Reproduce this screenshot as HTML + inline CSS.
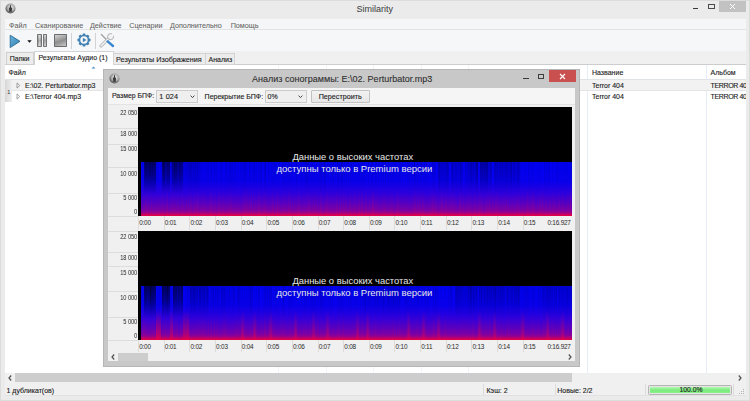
<!DOCTYPE html>
<html><head><meta charset="utf-8">
<style>
*{margin:0;padding:0;box-sizing:border-box}
html,body{width:750px;height:401px;overflow:hidden;background:#ebebeb}
body{position:relative;font-family:"Liberation Sans",sans-serif;font-size:7px;color:#1c1c1c}
.a{position:absolute}
.t{position:absolute;white-space:nowrap;line-height:1;-webkit-text-stroke:0.12px #1c1c1c}
.m{color:#626262;-webkit-text-stroke:0.05px #626262;font-size:7.2px}
.yl{position:absolute;white-space:nowrap;line-height:1;font-size:6.5px;letter-spacing:-0.2px;word-spacing:0.3px;color:#2a2a2a;text-align:right;width:29px;left:0;transform:scaleX(0.88);transform-origin:100% 50%}
.tl{position:absolute;white-space:nowrap;line-height:1;font-size:6.4px;letter-spacing:-0.2px;color:#2a2a2a}
.hl{position:absolute;left:0;width:30px;height:1px;background:#dddddd}
</style></head><body>
<!-- main window frame -->
<div class="a" style="left:0;top:0;width:750px;height:401px;background:#ebebeb;border:1px solid #dcdcdc"></div>
<!-- app icon -->
<svg class="a" style="left:4.8px;top:3.2px" width="11" height="11" viewBox="0 0 11 11">
 <defs><radialGradient id="ic" cx="0.55" cy="0.4" r="0.6"><stop offset="0" stop-color="#f0f0f0"/><stop offset="0.6" stop-color="#a8a8a8"/><stop offset="1" stop-color="#505050"/></radialGradient></defs>
 <circle cx="5.5" cy="5.5" r="5" fill="url(#ic)"/>
 <path d="M5 2.3h1v1.8l1 1.1v1.3l-0.5 0.5l0.8 1.8h-3.6l0.8-1.8l-0.5-0.5v-1.3l1-1.1z" fill="#383838"/>
</svg>
<div class="t" style="left:356.5px;top:5.2px;font-size:9px;color:#444;-webkit-text-stroke:0.05px #444">Similarity</div>
<!-- caption buttons -->
<div class="a" style="left:693px;top:7.6px;width:5px;height:1.3px;background:#3a3a3a"></div>
<div class="a" style="left:708px;top:4px;width:6.5px;height:4.6px;border:0.8px solid #4a4a4a;border-top-width:1.6px"></div>
<div class="a" style="left:719px;top:1px;width:26.5px;height:11.3px;background:#c2c2c2"></div>
<svg class="a" style="left:728.5px;top:3.2px" width="7" height="7" viewBox="0 0 7 7"><path d="M1 1L6 6M6 1L1 6" stroke="#fff" stroke-width="1"/></svg>

<!-- client area -->
<div class="a" style="left:4.5px;top:18.6px;width:741px;height:377.5px;background:#f0f0f0"></div>
<!-- menu bar -->
<div class="a" style="left:4.5px;top:18.6px;width:741px;height:11px;background:#f5f6f7;border-bottom:1px solid #e2e3e4"></div>
<div class="t m" style="left:9px;top:21.5px">Файл</div>
<div class="t m" style="left:35px;top:21.5px">Сканирование</div>
<div class="t m" style="left:90px;top:21.5px">Действие</div>
<div class="t m" style="left:129.3px;top:21.5px">Сценарии</div>
<div class="t m" style="left:170px;top:21.5px">Дополнительно</div>
<div class="t m" style="left:230.7px;top:21.5px">Помощь</div>
<!-- toolbar -->
<div class="a" style="left:4.5px;top:29.6px;width:741px;height:21.5px;background:#f6f7f8"></div>
<svg class="a" style="left:9px;top:33.5px" width="13" height="15" viewBox="0 0 13 15">
 <defs><linearGradient id="pg" x1="0" y1="0" x2="1" y2="1"><stop offset="0" stop-color="#6bb4de"/><stop offset="1" stop-color="#2f7db0"/></linearGradient></defs>
 <path d="M1.2 1.2L11 7.3L1.2 13.6Z" fill="url(#pg)" stroke="#2c6a92" stroke-width="0.9" stroke-linejoin="round"/>
</svg>
<svg class="a" style="left:26.5px;top:39.5px" width="5" height="3" viewBox="0 0 5 3"><path d="M0.3 0.3H4.7L2.5 2.8Z" fill="#111"/></svg>
<!-- pause -->
<div class="a" style="left:37.3px;top:34px;width:4.6px;height:12.8px;border:1px solid #747474;border-radius:0.8px;background:linear-gradient(90deg,rgba(0,0,0,.12),rgba(255,255,255,.35) 55%,rgba(0,0,0,.1)),linear-gradient(#d6d6d6,#9a9a9a 50%,#d0d0d0)"></div>
<div class="a" style="left:43px;top:34px;width:4px;height:12.8px;border:1px solid #747474;border-radius:0.8px;background:linear-gradient(90deg,rgba(0,0,0,.12),rgba(255,255,255,.35) 55%,rgba(0,0,0,.1)),linear-gradient(#d6d6d6,#9a9a9a 50%,#d0d0d0)"></div>
<!-- stop -->
<div class="a" style="left:54px;top:34px;width:13px;height:12.8px;border:1px solid #6c6c6c;border-radius:0.8px;background:linear-gradient(160deg,#d4d4d4,#8e8e8e 55%,#c8c8c8)"></div>
<div class="a" style="left:71.3px;top:33px;width:1px;height:15.5px;background:#d2d2d2"></div>
<!-- gear -->
<svg class="a" style="left:77px;top:33.4px" width="14" height="14" viewBox="0 0 14 14">
 <g fill="#4282b4">
  <circle cx="7" cy="7" r="5.3"/>
  <rect x="5.6" y="0.5" width="2.8" height="13" rx="0.6"/>
  <rect x="5.6" y="0.5" width="2.8" height="13" rx="0.6" transform="rotate(45 7 7)"/>
  <rect x="5.6" y="0.5" width="2.8" height="13" rx="0.6" transform="rotate(90 7 7)"/>
  <rect x="5.6" y="0.5" width="2.8" height="13" rx="0.6" transform="rotate(135 7 7)"/>
 </g>
 <circle cx="7" cy="7" r="3.7" fill="#f4f6f8"/>
 <path d="M5.9 4.7L9.5 7L5.9 9.3Z" fill="#4282b4"/>
</svg>
<div class="a" style="left:94.8px;top:33px;width:1px;height:15.5px;background:#d2d2d2"></div>
<!-- tools -->
<svg class="a" style="left:99px;top:33px" width="16" height="15" viewBox="0 0 16 15">
 <path d="M2.4 1.4L7.8 7" stroke="#a4a4a4" stroke-width="1.4" stroke-linecap="round"/>
 <path d="M9.5 5.6L2 13" stroke="#a8a8a8" stroke-width="3" stroke-linecap="round"/>
 <path d="M9.5 5.6L2 13" stroke="#f4f4f4" stroke-width="1.6" stroke-linecap="round"/>
 <circle cx="11.6" cy="3.6" r="3" fill="#f4f4f4" stroke="#a8a8a8" stroke-width="0.9"/>
 <path d="M11.3 3.9L13.6 -0.2L15.6 2L11.3 3.9Z" fill="#f6f7f8"/>
 <path d="M8.6 8.4L14 13" stroke="#3a86d0" stroke-width="2.4" stroke-linecap="round"/>
</svg>

<!-- tab strip -->
<div class="a" style="left:4.5px;top:51px;width:741px;height:14px;background:#f0f0f0;border-bottom:1px solid #cdcdcd"></div>
<div class="a" style="left:5.5px;top:52.2px;width:28.5px;height:12.8px;background:#ececec;border:1px solid #d0d0d0"></div>
<div class="t" style="left:9.8px;top:55.3px">Папки</div>
<div class="a" style="left:113.5px;top:52.6px;width:92px;height:12.4px;background:#ececec;border:1px solid #d3d3d3;border-left:none"></div>
<div class="t" style="left:116px;top:55.5px;font-size:7.25px">Результаты Изображения</div>
<div class="a" style="left:205.5px;top:52.6px;width:29px;height:12.4px;background:#ececec;border:1px solid #d3d3d3;border-left:none"></div>
<div class="t" style="left:208.5px;top:55.5px">Анализ</div>
<div class="a" style="left:33.6px;top:51.2px;width:80px;height:14.8px;background:#fff;border:1px solid #d3d3d3;border-bottom:none"></div>
<div class="t" style="left:38.5px;top:54.2px">Результаты Аудио (1)</div>

<!-- list -->
<div class="a" style="left:4.5px;top:65px;width:741px;height:308px;background:#fff;overflow:hidden">
 <div class="a" style="left:273.5px;top:0;width:1px;height:308px;background:#f0f4fa"></div>
 <div class="a" style="left:321.3px;top:0;width:1px;height:308px;background:#f0f4fa"></div>
 <div class="a" style="left:368.5px;top:0;width:1px;height:308px;background:#f0f4fa"></div>
 <div class="a" style="left:463.5px;top:0;width:1px;height:308px;background:#f0f4fa"></div>
 <div class="a" style="left:416.5px;top:0;width:1px;height:308px;background:#f0f4fa"></div>
 <div class="a" style="left:582.8px;top:0;width:1px;height:308px;background:#e6edf6"></div>
 <div class="a" style="left:701.5px;top:0;width:1px;height:308px;background:#e6edf6"></div>
 <div class="a" style="left:0;top:13.5px;width:741px;height:1.5px;background:#e0e3e6"></div>
 <div class="t" style="left:4px;top:3.8px">Файл</div>
 <div class="t" style="left:587.5px;top:3.8px">Название</div>
 <div class="t" style="left:706px;top:3.8px">Альбом</div>
 <svg class="a" style="left:86.7px;top:0.6px" width="5" height="3" viewBox="0 0 5 3"><path d="M0.5 2.6L2.5 0.5L4.5 2.6Z" fill="#5592c4"/></svg>
 <div class="a" style="left:0;top:15px;width:741px;height:10.5px;background:#f2f2f2;border-bottom:1px solid #e4e4e4"></div>
 <div class="a" style="left:0;top:15px;width:7.5px;height:21.5px;background:linear-gradient(90deg,#d6d6d6,#eeeeee)"></div>
 <div class="t" style="left:2.8px;top:25.2px;font-size:5.5px;color:#333;-webkit-text-stroke:0">1</div>
 <svg class="a" style="left:11px;top:17px" width="5" height="7" viewBox="0 0 5 7"><path d="M1 0.9L3.8 3.5L1 6.1Z" fill="none" stroke="#8a8a8a" stroke-width="0.8"/></svg>
 <svg class="a" style="left:11px;top:28px" width="5" height="7" viewBox="0 0 5 7"><path d="M1 0.9L3.8 3.5L1 6.1Z" fill="none" stroke="#8a8a8a" stroke-width="0.8"/></svg>
 <div class="t" style="left:20.5px;top:17px">E:\02. Perturbator.mp3</div>
 <div class="t" style="left:20.5px;top:28.4px">E:\Terror 404.mp3</div>
 <div class="t" style="left:587.5px;top:17px">Terror 404</div>
 <div class="t" style="left:587.5px;top:28.4px">Terror 404</div>
 <div class="t" style="left:706px;top:17px;letter-spacing:-0.35px">TERROR 404</div>
 <div class="t" style="left:706px;top:28.4px;letter-spacing:-0.35px">TERROR 404</div>
</div>

<!-- scrollbar -->
<div class="a" style="left:4.5px;top:373px;width:741px;height:9px;background:#f0f0f0"></div>
<div class="a" style="left:15px;top:373px;width:556.5px;height:8.8px;background:#cdcdcd"></div>
<svg class="a" style="left:8px;top:374.8px" width="4" height="6" viewBox="0 0 4 6"><path d="M3.2 0.5L1 3L3.2 5.5" fill="none" stroke="#505050" stroke-width="1.2"/></svg>
<svg class="a" style="left:738px;top:374.8px" width="4" height="6" viewBox="0 0 4 6"><path d="M0.8 0.5L3 3L0.8 5.5" fill="none" stroke="#505050" stroke-width="1.2"/></svg>

<!-- status bar -->
<div class="a" style="left:4.5px;top:382px;width:741px;height:14px;background:#f0f0f0;border-bottom:1px solid #e2e2e2"></div>
<div class="t" style="left:6.5px;top:387px">1 дубликат(ов)</div>
<div class="a" style="left:483px;top:384px;width:1px;height:11px;background:#dcdcdc"></div>
<div class="t" style="left:486.5px;top:387px">Кэш: 2</div>
<div class="a" style="left:554.5px;top:384px;width:1px;height:11px;background:#dcdcdc"></div>
<div class="t" style="left:557.3px;top:387px">Новые: 2/2</div>
<div class="a" style="left:644.5px;top:384px;width:1px;height:11px;background:#dcdcdc"></div>
<div class="a" style="left:648px;top:385.3px;width:83.5px;height:9.5px;border:1px solid #b4b4b4;border-radius:1.5px;background:#e6e6e6;padding:0.8px"><div style="width:100%;height:100%;background:linear-gradient(#b4f8b4,#7aeb7a 55%,#8cf08c)"></div></div>
<div class="t" style="left:679.5px;top:387px;font-size:6.8px">100.0%</div>
<div class="a" style="left:733px;top:384px;width:1px;height:11px;background:#dcdcdc"></div>
<svg class="a" style="left:737px;top:388px" width="8" height="8" viewBox="0 0 8 8"><g fill="#b0b0b0"><rect x="6" y="1" width="1" height="1"/><rect x="4" y="3" width="1" height="1"/><rect x="6" y="3" width="1" height="1"/><rect x="2" y="5" width="1" height="1"/><rect x="4" y="5" width="1" height="1"/><rect x="6" y="5" width="1" height="1"/></g></svg>

<!-- ============ dialog ============ -->
<div class="a" style="left:103px;top:69.2px;width:477px;height:297.5px;background:#c8c8c8;border:1px solid #b6b6b6"></div>
<svg class="a" style="left:108.7px;top:72.9px" width="11" height="11" viewBox="0 0 11 11">
 <circle cx="5.5" cy="5.5" r="5" fill="url(#ic)"/>
 <path d="M5 2.3h1v1.8l1 1.1v1.3l-0.5 0.5l0.8 1.8h-3.6l0.8-1.8l-0.5-0.5v-1.3l1-1.1z" fill="#383838"/>
</svg>
<div class="t" style="left:252px;top:74.5px;font-size:9px;color:#303030;-webkit-text-stroke:0.1px #303030">Анализ сонограммы: E:\02. Perturbator.mp3</div>
<div class="a" style="left:522.5px;top:77.6px;width:6px;height:1.3px;background:#3a3a3a"></div>
<div class="a" style="left:538px;top:74px;width:6px;height:5px;border:0.8px solid #3e3e3e;border-top-width:1.6px"></div>
<div class="a" style="left:549px;top:70px;width:26.6px;height:12px;background:#c9504f"></div>
<svg class="a" style="left:558.8px;top:72.6px" width="7" height="7" viewBox="0 0 7 7"><path d="M1 1L6 6M6 1L1 6" stroke="#fff" stroke-width="1.1"/></svg>

<div class="a" style="left:108px;top:88px;width:467px;height:273px;background:#f0f0f0"></div>
<!-- dialog toolbar -->
<div class="a" style="left:108px;top:88px;width:467px;height:17px;background:#f5f5f5;border-bottom:1px solid #e3e3e3"></div>
<div class="t" style="left:112px;top:93px;font-size:6.9px">Размер БПФ:</div>
<div class="a" style="left:155.8px;top:89.7px;width:42px;height:13px;background:#efefef;border:1px solid #cccccc"></div>
<div class="t" style="left:159.3px;top:93.2px;font-size:7.3px;word-spacing:0.4px">1 024</div>
<svg class="a" style="left:189.5px;top:94.8px" width="5" height="4" viewBox="0 0 5 4"><path d="M0.6 0.6L2.5 2.6L4.4 0.6" fill="none" stroke="#444" stroke-width="1"/></svg>
<div class="t" style="left:204.6px;top:93px">Перекрытие БПФ:</div>
<div class="a" style="left:265px;top:89.7px;width:42px;height:13px;background:#efefef;border:1px solid #cccccc"></div>
<div class="t" style="left:267.5px;top:93px">0%</div>
<svg class="a" style="left:297.5px;top:94.8px" width="5" height="4" viewBox="0 0 5 4"><path d="M0.6 0.6L2.5 2.6L4.4 0.6" fill="none" stroke="#444" stroke-width="1"/></svg>
<div class="a" style="left:311.2px;top:90px;width:58.7px;height:12.7px;background:linear-gradient(#f2f2f2,#e6e6e6);border:1px solid #c2c2c2;border-radius:1px"></div>
<div class="t" style="left:318.7px;top:93px;font-size:7.2px">Перестроить</div>

<!-- chart 1 -->
<div class="a" style="left:108px;top:107.2px;width:30px;height:109px">
 <div class="hl" style="top:21.3px"></div><div class="hl" style="top:36.4px"></div><div class="hl" style="top:60.3px"></div><div class="hl" style="top:85.5px"></div><div class="hl" style="top:109px"></div>
 <div class="yl" style="top:2.9px">22 050</div>
 <div class="yl" style="top:23.4px">18 000</div>
 <div class="yl" style="top:38.4px">15 000</div>
 <div class="yl" style="top:63.4px">10 000</div>
 <div class="yl" style="top:87.8px">5 000</div>
 <div class="yl" style="top:101.8px">0</div>
</div>
<div class="a" style="left:137.8px;top:107.2px;width:434.4px;height:108.8px;background:#000"></div>
<div class="a" style="left:141px;top:161.8px;width:431.2px;height:54.2px;background:linear-gradient(#0000f2,#0800ee 35%,#2c00de 58%,#5800c0 78%,#7a00a6 90%,#b00078 96%,#e00048 99%,#e80040)"></div>

<!-- chart 2 -->
<div class="a" style="left:108px;top:231.2px;width:30px;height:109px">
 <div class="hl" style="top:-0.5px"></div><div class="hl" style="top:20.5px"></div><div class="hl" style="top:35px"></div><div class="hl" style="top:60.2px"></div><div class="hl" style="top:85.4px"></div><div class="hl" style="top:109px"></div>
 <div class="yl" style="top:2.9px">22 050</div>
 <div class="yl" style="top:23.4px">18 000</div>
 <div class="yl" style="top:38.4px">15 000</div>
 <div class="yl" style="top:63.4px">10 000</div>
 <div class="yl" style="top:87.8px">5 000</div>
 <div class="yl" style="top:101.8px">0</div>
</div>
<div class="a" style="left:137.8px;top:231.2px;width:434.4px;height:108.8px;background:#000"></div>
<div class="a" style="left:141px;top:285.8px;width:431.2px;height:54.2px;background:linear-gradient(#0000f2,#0800ee 35%,#2c00de 58%,#5800c0 78%,#7a00a6 90%,#b00078 96%,#e00048 99%,#e80040)"></div>

<!--GEN--><div class="a" style="left:141px;top:161.8px;width:431px;height:54.2px;background:linear-gradient(90deg,rgba(0,0,30,0.02) 0px 1px,rgba(0,0,30,0.05) 1px 2px,rgba(0,0,30,0.02) 2px 3px,rgba(0,0,30,0.62) 3px 4px,rgba(0,0,30,0.75) 4px 5px,rgba(0,0,30,0.73) 5px 6px,rgba(0,0,30,0.67) 6px 7px,rgba(0,0,30,0.73) 7px 8px,rgba(0,0,30,0.72) 8px 10px,rgba(0,0,30,0.7) 10px 11px,rgba(0,0,30,0.73) 11px 12px,rgba(0,0,30,0.66) 12px 13px,rgba(0,0,30,0.69) 13px 14px,rgba(0,0,30,0.67) 14px 15px,rgba(0,0,30,0.09) 15px 16px,rgba(0,0,30,0.05) 16px 17px,rgba(0,0,30,0.03) 17px 18px,rgba(0,0,30,0.0) 18px 19px,rgba(0,0,30,0.03) 19px 20px,rgba(0,0,30,0.05) 20px 21px,rgba(0,0,30,0.63) 21px 22px,rgba(0,0,30,0.73) 22px 23px,rgba(0,0,30,0.71) 23px 24px,rgba(0,0,30,0.49) 24px 25px,rgba(0,0,30,0.54) 25px 26px,rgba(0,0,30,0.64) 26px 27px,rgba(0,0,30,0.62) 27px 28px,rgba(0,0,30,0.66) 28px 29px,rgba(0,0,30,0.06) 29px 30px,rgba(0,0,30,0.18) 30px 31px,rgba(0,0,30,0.53) 31px 32px,rgba(0,0,30,0.58) 32px 33px,rgba(0,0,30,0.72) 33px 34px,rgba(0,0,30,0.64) 34px 36px,rgba(0,0,30,0.57) 36px 37px,rgba(0,0,30,0.5) 37px 38px,rgba(0,0,30,0.61) 38px 40px,rgba(0,0,30,0.53) 40px 41px,rgba(0,0,30,0.56) 41px 42px,rgba(0,0,30,0.15) 42px 43px,rgba(0,0,30,0.09) 43px 44px,rgba(0,0,30,0.14) 44px 45px,rgba(0,0,30,0.16) 45px 46px,rgba(0,0,30,0.15) 46px 47px,rgba(0,0,30,0.17) 47px 48px,rgba(0,0,30,0.24) 48px 49px,rgba(0,0,30,0.25) 49px 50px,rgba(0,0,30,0.22) 50px 51px,rgba(0,0,30,0.15) 51px 52px,rgba(0,0,30,0.24) 52px 53px,rgba(0,0,30,0.17) 53px 54px,rgba(0,0,30,0.25) 54px 55px,rgba(0,0,30,0.14) 55px 56px,rgba(0,0,30,0.25) 56px 57px,rgba(0,0,30,0.2) 57px 58px,rgba(0,0,30,0.13) 58px 59px,rgba(0,0,30,0.06) 59px 60px,rgba(0,0,30,0.08) 60px 61px,rgba(0,0,30,0.1) 61px 62px,rgba(0,0,30,0.02) 62px 63px,rgba(0,0,30,0.01) 63px 64px,rgba(0,0,30,0.09) 64px 65px,rgba(0,0,30,0.05) 65px 66px,rgba(0,0,30,0.09) 66px 67px,rgba(0,0,30,0.13) 67px 68px,rgba(0,0,30,0.0) 68px 69px,rgba(0,0,30,0.1) 69px 70px,rgba(0,0,30,0.15) 70px 71px,rgba(0,0,30,0.06) 71px 72px,rgba(0,0,30,0.03) 72px 73px,rgba(0,0,30,0.13) 73px 74px,rgba(0,0,30,0.1) 74px 75px,rgba(0,0,30,0.13) 75px 76px,rgba(0,0,30,0.06) 76px 77px,rgba(0,0,30,0.0) 77px 78px,rgba(0,0,30,0.07) 78px 79px,rgba(0,0,30,0.05) 79px 80px,rgba(0,0,30,0.13) 80px 81px,rgba(0,0,30,0.09) 81px 82px,rgba(0,0,30,0.0) 82px 83px,rgba(0,0,30,0.01) 83px 84px,rgba(0,0,30,0.13) 84px 85px,rgba(0,0,30,0.12) 85px 86px,rgba(0,0,30,0.04) 86px 87px,rgba(0,0,30,0.08) 87px 88px,rgba(0,0,30,0.11) 88px 90px,rgba(0,0,30,0.13) 90px 91px,rgba(0,0,30,0.1) 91px 92px,rgba(0,0,30,0.07) 92px 93px,rgba(0,0,30,0.06) 93px 94px,rgba(0,0,30,0.14) 94px 95px,rgba(0,0,30,0.0) 95px 96px,rgba(0,0,30,0.07) 96px 97px,rgba(0,0,30,0.08) 97px 98px,rgba(0,0,30,0.0) 98px 99px,rgba(0,0,30,0.1) 99px 100px,rgba(0,0,30,0.04) 100px 101px,rgba(0,0,30,0.13) 101px 102px,rgba(0,0,30,0.07) 102px 103px,rgba(0,0,30,0.12) 103px 104px,rgba(0,0,30,0.15) 104px 105px,rgba(0,0,30,0.1) 105px 106px,rgba(0,0,30,0.03) 106px 107px,rgba(0,0,30,0.0) 107px 108px,rgba(0,0,30,0.19) 108px 109px,rgba(0,0,30,0.07) 109px 110px,rgba(0,0,30,0.04) 110px 111px,rgba(0,0,30,0.09) 111px 112px,rgba(0,0,30,0.07) 112px 113px,rgba(0,0,30,0.13) 113px 114px,rgba(0,0,30,0.08) 114px 116px,rgba(0,0,30,0.04) 116px 117px,rgba(0,0,30,0.11) 117px 118px,rgba(0,0,30,0.02) 118px 119px,rgba(0,0,30,0.12) 119px 120px,rgba(0,0,30,0.17) 120px 121px,rgba(0,0,30,0.0) 121px 123px,rgba(0,0,30,0.12) 123px 124px,rgba(0,0,30,0.23) 124px 125px,rgba(0,0,30,0.02) 125px 126px,rgba(0,0,30,0.0) 126px 127px,rgba(0,0,30,0.12) 127px 128px,rgba(0,0,30,0.03) 128px 129px,rgba(0,0,30,0.05) 129px 130px,rgba(0,0,30,0.06) 130px 131px,rgba(0,0,30,0.11) 131px 132px,rgba(0,0,30,0.06) 132px 133px,rgba(0,0,30,0.1) 133px 134px,rgba(0,0,30,0.07) 134px 135px,rgba(0,0,30,0.03) 135px 136px,rgba(0,0,30,0.06) 136px 137px,rgba(0,0,30,0.02) 137px 138px,rgba(0,0,30,0.08) 138px 139px,rgba(0,0,30,0.01) 139px 141px,rgba(0,0,30,0.17) 141px 142px,rgba(0,0,30,0.08) 142px 144px,rgba(0,0,30,0.11) 144px 145px,rgba(0,0,30,0.05) 145px 146px,rgba(0,0,30,0.07) 146px 147px,rgba(0,0,30,0.11) 147px 148px,rgba(0,0,30,0.1) 148px 149px,rgba(0,0,30,0.01) 149px 150px,rgba(0,0,30,0.13) 150px 151px,rgba(0,0,30,0.04) 151px 152px,rgba(0,0,30,0.02) 152px 153px,rgba(0,0,30,0.03) 153px 154px,rgba(0,0,30,0.06) 154px 155px,rgba(0,0,30,0.18) 155px 156px,rgba(0,0,30,0.01) 156px 157px,rgba(0,0,30,0.09) 157px 158px,rgba(0,0,30,0.0) 158px 159px,rgba(0,0,30,0.08) 159px 160px,rgba(0,0,30,0.13) 160px 161px,rgba(0,0,30,0.07) 161px 162px,rgba(0,0,30,0.04) 162px 163px,rgba(0,0,30,0.09) 163px 164px,rgba(0,0,30,0.12) 164px 166px,rgba(0,0,30,0.2) 166px 167px,rgba(0,0,30,0.09) 167px 168px,rgba(0,0,30,0.04) 168px 169px,rgba(0,0,30,0.07) 169px 170px,rgba(0,0,30,0.08) 170px 171px,rgba(0,0,30,0.09) 171px 172px,rgba(0,0,30,0.08) 172px 173px,rgba(0,0,30,0.09) 173px 174px,rgba(0,0,30,0.0) 174px 175px,rgba(0,0,30,0.13) 175px 176px,rgba(0,0,30,0.05) 176px 177px,rgba(0,0,30,0.01) 177px 178px,rgba(0,0,30,0.12) 178px 179px,rgba(0,0,30,0.16) 179px 180px,rgba(0,0,30,0.11) 180px 181px,rgba(0,0,30,0.09) 181px 182px,rgba(0,0,30,0.02) 182px 183px,rgba(0,0,30,0.25) 183px 184px,rgba(0,0,30,0.13) 184px 185px,rgba(0,0,30,0.01) 185px 186px,rgba(0,0,30,0.03) 186px 187px,rgba(0,0,30,0.09) 187px 188px,rgba(0,0,30,0.0) 188px 189px,rgba(0,0,30,0.09) 189px 190px,rgba(0,0,30,0.05) 190px 191px,rgba(0,0,30,0.15) 191px 192px,rgba(0,0,30,0.14) 192px 193px,rgba(0,0,30,0.0) 193px 194px,rgba(0,0,30,0.08) 194px 195px,rgba(0,0,30,0.0) 195px 196px,rgba(0,0,30,0.15) 196px 197px,rgba(0,0,30,0.09) 197px 198px,rgba(0,0,30,0.11) 198px 199px,rgba(0,0,30,0.02) 199px 200px,rgba(0,0,30,0.19) 200px 201px,rgba(0,0,30,0.2) 201px 202px,rgba(0,0,30,0.02) 202px 203px,rgba(0,0,30,0.1) 203px 204px,rgba(0,0,30,0.04) 204px 205px,rgba(0,0,30,0.08) 205px 206px,rgba(0,0,30,0.0) 206px 207px,rgba(0,0,30,0.19) 207px 208px,rgba(0,0,30,0.02) 208px 209px,rgba(0,0,30,0.06) 209px 210px,rgba(0,0,30,0.11) 210px 211px,rgba(0,0,30,0.04) 211px 212px,rgba(0,0,30,0.07) 212px 213px,rgba(0,0,30,0.05) 213px 214px,rgba(0,0,30,0.07) 214px 215px,rgba(0,0,30,0.01) 215px 216px,rgba(0,0,30,0.05) 216px 217px,rgba(0,0,30,0.07) 217px 218px,rgba(0,0,30,0.06) 218px 219px,rgba(0,0,30,0.08) 219px 220px,rgba(0,0,30,0.06) 220px 221px,rgba(0,0,30,0.13) 221px 222px,rgba(0,0,30,0.06) 222px 223px,rgba(0,0,30,0.07) 223px 224px,rgba(0,0,30,0.04) 224px 225px,rgba(0,0,30,0.05) 225px 226px,rgba(0,0,30,0.0) 226px 227px,rgba(0,0,30,0.11) 227px 228px,rgba(0,0,30,0.01) 228px 229px,rgba(0,0,30,0.04) 229px 230px,rgba(0,0,30,0.1) 230px 232px,rgba(0,0,30,0.06) 232px 233px,rgba(0,0,30,0.0) 233px 234px,rgba(0,0,30,0.11) 234px 235px,rgba(0,0,30,0.1) 235px 236px,rgba(0,0,30,0.0) 236px 237px,rgba(0,0,30,0.13) 237px 238px,rgba(0,0,30,0.04) 238px 239px,rgba(0,0,30,0.01) 239px 240px,rgba(0,0,30,0.09) 240px 241px,rgba(0,0,30,0.07) 241px 242px,rgba(0,0,30,0.09) 242px 243px,rgba(0,0,30,0.0) 243px 244px,rgba(0,0,30,0.19) 244px 245px,rgba(0,0,30,0.04) 245px 246px,rgba(0,0,30,0.0) 246px 247px,rgba(0,0,30,0.12) 247px 248px,rgba(0,0,30,0.06) 248px 249px,rgba(0,0,30,0.1) 249px 250px,rgba(0,0,30,0.06) 250px 251px,rgba(0,0,30,0.08) 251px 252px,rgba(0,0,30,0.09) 252px 253px,rgba(0,0,30,0.04) 253px 254px,rgba(0,0,30,0.12) 254px 255px,rgba(0,0,30,0.05) 255px 256px,rgba(0,0,30,0.03) 256px 257px,rgba(0,0,30,0.08) 257px 258px,rgba(0,0,30,0.11) 258px 259px,rgba(0,0,30,0.07) 259px 260px,rgba(0,0,30,0.03) 260px 261px,rgba(0,0,30,0.12) 261px 262px,rgba(0,0,30,0.0) 262px 263px,rgba(0,0,30,0.02) 263px 264px,rgba(0,0,30,0.08) 264px 265px,rgba(0,0,30,0.0) 265px 266px,rgba(0,0,30,0.08) 266px 268px,rgba(0,0,30,0.13) 268px 269px,rgba(0,0,30,0.03) 269px 270px,rgba(0,0,30,0.04) 270px 271px,rgba(0,0,30,0.1) 271px 272px,rgba(0,0,30,0.0) 272px 273px,rgba(0,0,30,0.27) 273px 274px,rgba(0,0,30,0.04) 274px 276px,rgba(0,0,30,0.13) 276px 277px,rgba(0,0,30,0.08) 277px 278px,rgba(0,0,30,0.0) 278px 279px,rgba(0,0,30,0.12) 279px 280px,rgba(0,0,30,0.13) 280px 281px,rgba(0,0,30,0.05) 281px 282px,rgba(0,0,30,0.06) 282px 283px,rgba(0,0,30,0.11) 283px 284px,rgba(0,0,30,0.03) 284px 285px,rgba(0,0,30,0.11) 285px 286px,rgba(0,0,30,0.09) 286px 287px,rgba(0,0,30,0.04) 287px 288px,rgba(0,0,30,0.0) 288px 289px,rgba(0,0,30,0.07) 289px 290px,rgba(0,0,30,0.03) 290px 291px,rgba(0,0,30,0.14) 291px 292px,rgba(0,0,30,0.09) 292px 293px,rgba(0,0,30,0.13) 293px 294px,rgba(0,0,30,0.09) 294px 295px,rgba(0,0,30,0.0) 295px 297px,rgba(0,0,30,0.26) 297px 298px,rgba(0,0,30,0.33) 298px 299px,rgba(0,0,30,0.2) 299px 300px,rgba(0,0,30,0.18) 300px 301px,rgba(0,0,30,0.21) 301px 302px,rgba(0,0,30,0.19) 302px 303px,rgba(0,0,30,0.18) 303px 304px,rgba(0,0,30,0.23) 304px 305px,rgba(0,0,30,0.2) 305px 306px,rgba(0,0,30,0.31) 306px 307px,rgba(0,0,30,0.22) 307px 308px,rgba(0,0,30,0.0) 308px 310px,rgba(0,0,30,0.2) 310px 311px,rgba(0,0,30,0.31) 311px 312px,rgba(0,0,30,0.18) 312px 313px,rgba(0,0,30,0.17) 313px 314px,rgba(0,0,30,0.2) 314px 315px,rgba(0,0,30,0.21) 315px 316px,rgba(0,0,30,0.14) 316px 317px,rgba(0,0,30,0.22) 317px 318px,rgba(0,0,30,0.12) 318px 319px,rgba(0,0,30,0.3) 319px 320px,rgba(0,0,30,0.22) 320px 321px,rgba(0,0,30,0.18) 321px 322px,rgba(0,0,30,0.0) 322px 324px,rgba(0,0,30,0.21) 324px 325px,rgba(0,0,30,0.16) 325px 327px,rgba(0,0,30,0.21) 327px 328px,rgba(0,0,30,0.19) 328px 329px,rgba(0,0,30,0.28) 329px 330px,rgba(0,0,30,0.29) 330px 331px,rgba(0,0,30,0.22) 331px 332px,rgba(0,0,30,0.25) 332px 333px,rgba(0,0,30,0.14) 333px 334px,rgba(0,0,30,0.26) 334px 335px,rgba(0,0,30,0.4) 335px 336px,rgba(0,0,30,0.43) 336px 337px,rgba(0,0,30,0.0) 337px 339px,rgba(0,0,30,0.42) 339px 340px,rgba(0,0,30,0.33) 340px 341px,rgba(0,0,30,0.44) 341px 342px,rgba(0,0,30,0.32) 342px 343px,rgba(0,0,30,0.37) 343px 344px,rgba(0,0,30,0.41) 344px 345px,rgba(0,0,30,0.44) 345px 346px,rgba(0,0,30,0.4) 346px 347px,rgba(0,0,30,0.17) 347px 348px,rgba(0,0,30,0.19) 348px 349px,rgba(0,0,30,0.27) 349px 350px,rgba(0,0,30,0.22) 350px 351px,rgba(0,0,30,0.0) 351px 353px,rgba(0,0,30,0.24) 353px 354px,rgba(0,0,30,0.27) 354px 355px,rgba(0,0,30,0.2) 355px 356px,rgba(0,0,30,0.27) 356px 357px,rgba(0,0,30,0.16) 357px 358px,rgba(0,0,30,0.25) 358px 359px,rgba(0,0,30,0.19) 359px 360px,rgba(0,0,30,0.26) 360px 361px,rgba(0,0,30,0.28) 361px 362px,rgba(0,0,30,0.18) 362px 363px,rgba(0,0,30,0.22) 363px 365px,rgba(0,0,30,0.29) 365px 366px,rgba(0,0,30,0.26) 366px 367px,rgba(0,0,30,0.15) 367px 368px,rgba(0,0,30,0.25) 368px 369px,rgba(0,0,30,0.26) 369px 370px,rgba(0,0,30,0.35) 370px 371px,rgba(0,0,30,0.12) 371px 372px,rgba(0,0,30,0.19) 372px 373px,rgba(0,0,30,0.3) 373px 374px,rgba(0,0,30,0.14) 374px 375px,rgba(0,0,30,0.15) 375px 376px,rgba(0,0,30,0.25) 376px 377px,rgba(0,0,30,0.28) 377px 378px,rgba(0,0,30,0.18) 378px 379px,rgba(0,0,30,0.06) 379px 380px,rgba(0,0,30,0.04) 380px 381px,rgba(0,0,30,0.0) 381px 383px,rgba(0,0,30,0.09) 383px 384px,rgba(0,0,30,0.0) 384px 385px,rgba(0,0,30,0.02) 385px 387px,rgba(0,0,30,0.1) 387px 388px,rgba(0,0,30,0.06) 388px 389px,rgba(0,0,30,0.0) 389px 390px,rgba(0,0,30,0.07) 390px 391px,rgba(0,0,30,0.08) 391px 392px,rgba(0,0,30,0.02) 392px 393px,rgba(0,0,30,0.01) 393px 394px,rgba(0,0,30,0.02) 394px 395px,rgba(0,0,30,0.0) 395px 396px,rgba(0,0,30,0.04) 396px 398px,rgba(0,0,30,0.0) 398px 399px,rgba(0,0,30,0.07) 399px 400px,rgba(0,0,30,0.0) 400px 403px,rgba(0,0,30,0.15) 403px 404px,rgba(0,0,30,0.0) 404px 405px,rgba(0,0,30,0.06) 405px 406px,rgba(0,0,30,0.09) 406px 407px,rgba(0,0,30,0.05) 407px 408px,rgba(0,0,30,0.1) 408px 409px,rgba(0,0,30,0.0) 409px 411px,rgba(0,0,30,0.08) 411px 412px,rgba(0,0,30,0.0) 412px 413px,rgba(0,0,30,0.01) 413px 414px,rgba(0,0,30,0.0) 414px 415px,rgba(0,0,30,0.09) 415px 416px,rgba(0,0,30,0.08) 416px 417px,rgba(0,0,30,0.0) 417px 418px,rgba(0,0,30,0.08) 418px 419px,rgba(0,0,30,0.04) 419px 420px,rgba(0,0,30,0.02) 420px 421px,rgba(0,0,30,0.03) 421px 422px,rgba(0,0,30,0.02) 422px 423px,rgba(0,0,30,0.07) 423px 424px,rgba(0,0,30,0.05) 424px 425px,rgba(0,0,30,0.01) 425px 426px,rgba(0,0,30,0.09) 426px 427px,rgba(0,0,30,0.0) 427px 428px,rgba(0,0,30,0.05) 428px 429px,rgba(0,0,30,0.06) 429px 430px,rgba(0,0,30,0.12) 430px 431px);-webkit-mask-image:linear-gradient(#000,rgba(0,0,0,.7) 25%,transparent 60%)"></div>
<div class="a" style="left:141px;top:161.8px;width:431px;height:54.2px;background:linear-gradient(90deg,rgba(235,0,70,0.06) 0px 1px,rgba(235,0,70,0.01) 1px 2px,rgba(235,0,70,0.02) 2px 3px,rgba(235,0,70,0.0) 3px 4px,rgba(235,0,70,0.18) 4px 5px,rgba(235,0,70,0.13) 5px 6px,rgba(235,0,70,0.03) 6px 7px,rgba(235,0,70,0.1) 7px 8px,rgba(235,0,70,0.07) 8px 9px,rgba(235,0,70,0.01) 9px 10px,rgba(235,0,70,0.12) 10px 11px,rgba(235,0,70,0.03) 11px 13px,rgba(235,0,70,0.0) 13px 14px,rgba(235,0,70,0.08) 14px 15px,rgba(235,0,70,0.04) 15px 16px,rgba(235,0,70,0.09) 16px 17px,rgba(235,0,70,0.01) 17px 18px,rgba(235,0,70,0.06) 18px 19px,rgba(235,0,70,0.0) 19px 20px,rgba(235,0,70,0.11) 20px 21px,rgba(235,0,70,0.06) 21px 22px,rgba(235,0,70,0.07) 22px 23px,rgba(235,0,70,0.08) 23px 24px,rgba(235,0,70,0.0) 24px 25px,rgba(235,0,70,0.1) 25px 26px,rgba(235,0,70,0.19) 26px 27px,rgba(235,0,70,0.0) 27px 30px,rgba(235,0,70,0.11) 30px 31px,rgba(235,0,70,0.06) 31px 32px,rgba(235,0,70,0.13) 32px 33px,rgba(235,0,70,0.1) 33px 34px,rgba(235,0,70,0.06) 34px 35px,rgba(235,0,70,0.07) 35px 36px,rgba(235,0,70,0.04) 36px 37px,rgba(235,0,70,0.11) 37px 38px,rgba(235,0,70,0.0) 38px 39px,rgba(235,0,70,0.02) 39px 40px,rgba(235,0,70,0.07) 40px 41px,rgba(235,0,70,0.18) 41px 42px,rgba(235,0,70,0.0) 42px 44px,rgba(235,0,70,0.01) 44px 45px,rgba(235,0,70,0.12) 45px 46px,rgba(235,0,70,0.03) 46px 47px,rgba(235,0,70,0.14) 47px 48px,rgba(235,0,70,0.0) 48px 49px,rgba(235,0,70,0.13) 49px 50px,rgba(235,0,70,0.12) 50px 51px,rgba(235,0,70,0.0) 51px 52px,rgba(235,0,70,0.06) 52px 53px,rgba(235,0,70,0.14) 53px 54px,rgba(235,0,70,0.06) 54px 55px,rgba(235,0,70,0.12) 55px 56px,rgba(235,0,70,0.22) 56px 57px,rgba(235,0,70,0.07) 57px 58px,rgba(235,0,70,0.03) 58px 60px,rgba(235,0,70,0.13) 60px 61px,rgba(235,0,70,0.07) 61px 64px,rgba(235,0,70,0.13) 64px 65px,rgba(235,0,70,0.01) 65px 66px,rgba(235,0,70,0.0) 66px 68px,rgba(235,0,70,0.16) 68px 69px,rgba(235,0,70,0.09) 69px 70px,rgba(235,0,70,0.19) 70px 71px,rgba(235,0,70,0.08) 71px 72px,rgba(235,0,70,0.03) 72px 73px,rgba(235,0,70,0.11) 73px 74px,rgba(235,0,70,0.07) 74px 75px,rgba(235,0,70,0.0) 75px 76px,rgba(235,0,70,0.02) 76px 77px,rgba(235,0,70,0.2) 77px 78px,rgba(235,0,70,0.1) 78px 79px,rgba(235,0,70,0.11) 79px 80px,rgba(235,0,70,0.06) 80px 81px,rgba(235,0,70,0.03) 81px 82px,rgba(235,0,70,0.14) 82px 83px,rgba(235,0,70,0.07) 83px 84px,rgba(235,0,70,0.03) 84px 85px,rgba(235,0,70,0.07) 85px 86px,rgba(235,0,70,0.02) 86px 87px,rgba(235,0,70,0.09) 87px 88px,rgba(235,0,70,0.16) 88px 89px,rgba(235,0,70,0.02) 89px 90px,rgba(235,0,70,0.18) 90px 91px,rgba(235,0,70,0.03) 91px 92px,rgba(235,0,70,0.09) 92px 93px,rgba(235,0,70,0.02) 93px 94px,rgba(235,0,70,0.06) 94px 95px,rgba(235,0,70,0.08) 95px 96px,rgba(235,0,70,0.05) 96px 97px,rgba(235,0,70,0.03) 97px 99px,rgba(235,0,70,0.02) 99px 100px,rgba(235,0,70,0.0) 100px 101px,rgba(235,0,70,0.06) 101px 102px,rgba(235,0,70,0.11) 102px 103px,rgba(235,0,70,0.14) 103px 104px,rgba(235,0,70,0.13) 104px 105px,rgba(235,0,70,0.25) 105px 106px,rgba(235,0,70,0.1) 106px 107px,rgba(235,0,70,0.05) 107px 108px,rgba(235,0,70,0.21) 108px 109px,rgba(235,0,70,0.01) 109px 110px,rgba(235,0,70,0.15) 110px 111px,rgba(235,0,70,0.01) 111px 112px,rgba(235,0,70,0.1) 112px 113px,rgba(235,0,70,0.0) 113px 114px,rgba(235,0,70,0.14) 114px 115px,rgba(235,0,70,0.07) 115px 116px,rgba(235,0,70,0.01) 116px 117px,rgba(235,0,70,0.2) 117px 118px,rgba(235,0,70,0.13) 118px 119px,rgba(235,0,70,0.08) 119px 120px,rgba(235,0,70,0.03) 120px 121px,rgba(235,0,70,0.08) 121px 122px,rgba(235,0,70,0.07) 122px 123px,rgba(235,0,70,0.13) 123px 124px,rgba(235,0,70,0.14) 124px 125px,rgba(235,0,70,0.03) 125px 126px,rgba(235,0,70,0.04) 126px 128px,rgba(235,0,70,0.0) 128px 129px,rgba(235,0,70,0.04) 129px 130px,rgba(235,0,70,0.07) 130px 131px,rgba(235,0,70,0.13) 131px 132px,rgba(235,0,70,0.17) 132px 133px,rgba(235,0,70,0.02) 133px 134px,rgba(235,0,70,0.12) 134px 135px,rgba(235,0,70,0.05) 135px 136px,rgba(235,0,70,0.23) 136px 137px,rgba(235,0,70,0.08) 137px 138px,rgba(235,0,70,0.12) 138px 139px,rgba(235,0,70,0.01) 139px 140px,rgba(235,0,70,0.02) 140px 141px,rgba(235,0,70,0.09) 141px 142px,rgba(235,0,70,0.05) 142px 143px,rgba(235,0,70,0.1) 143px 144px,rgba(235,0,70,0.0) 144px 145px,rgba(235,0,70,0.13) 145px 146px,rgba(235,0,70,0.02) 146px 147px,rgba(235,0,70,0.2) 147px 148px,rgba(235,0,70,0.06) 148px 149px,rgba(235,0,70,0.16) 149px 150px,rgba(235,0,70,0.0) 150px 151px,rgba(235,0,70,0.11) 151px 152px,rgba(235,0,70,0.02) 152px 153px,rgba(235,0,70,0.05) 153px 154px,rgba(235,0,70,0.08) 154px 155px,rgba(235,0,70,0.06) 155px 156px,rgba(235,0,70,0.1) 156px 157px,rgba(235,0,70,0.13) 157px 159px,rgba(235,0,70,0.07) 159px 160px,rgba(235,0,70,0.0) 160px 161px,rgba(235,0,70,0.02) 161px 162px,rgba(235,0,70,0.07) 162px 163px,rgba(235,0,70,0.0) 163px 164px,rgba(235,0,70,0.13) 164px 165px,rgba(235,0,70,0.06) 165px 167px,rgba(235,0,70,0.15) 167px 168px,rgba(235,0,70,0.13) 168px 169px,rgba(235,0,70,0.1) 169px 170px,rgba(235,0,70,0.01) 170px 171px,rgba(235,0,70,0.1) 171px 173px,rgba(235,0,70,0.02) 173px 174px,rgba(235,0,70,0.15) 174px 175px,rgba(235,0,70,0.12) 175px 176px,rgba(235,0,70,0.0) 176px 177px,rgba(235,0,70,0.09) 177px 178px,rgba(235,0,70,0.0) 178px 179px,rgba(235,0,70,0.16) 179px 180px,rgba(235,0,70,0.14) 180px 181px,rgba(235,0,70,0.0) 181px 182px,rgba(235,0,70,0.02) 182px 183px,rgba(235,0,70,0.09) 183px 184px,rgba(235,0,70,0.06) 184px 185px,rgba(235,0,70,0.19) 185px 186px,rgba(235,0,70,0.13) 186px 187px,rgba(235,0,70,0.06) 187px 188px,rgba(235,0,70,0.12) 188px 189px,rgba(235,0,70,0.0) 189px 190px,rgba(235,0,70,0.1) 190px 191px,rgba(235,0,70,0.14) 191px 192px,rgba(235,0,70,0.07) 192px 193px,rgba(235,0,70,0.03) 193px 194px,rgba(235,0,70,0.12) 194px 195px,rgba(235,0,70,0.22) 195px 196px,rgba(235,0,70,0.09) 196px 197px,rgba(235,0,70,0.0) 197px 198px,rgba(235,0,70,0.18) 198px 199px,rgba(235,0,70,0.0) 199px 200px,rgba(235,0,70,0.12) 200px 201px,rgba(235,0,70,0.04) 201px 202px,rgba(235,0,70,0.15) 202px 203px,rgba(235,0,70,0.02) 203px 204px,rgba(235,0,70,0.17) 204px 205px,rgba(235,0,70,0.1) 205px 206px,rgba(235,0,70,0.0) 206px 208px,rgba(235,0,70,0.06) 208px 209px,rgba(235,0,70,0.17) 209px 210px,rgba(235,0,70,0.09) 210px 211px,rgba(235,0,70,0.08) 211px 212px,rgba(235,0,70,0.06) 212px 213px,rgba(235,0,70,0.13) 213px 214px,rgba(235,0,70,0.11) 214px 215px,rgba(235,0,70,0.1) 215px 216px,rgba(235,0,70,0.01) 216px 217px,rgba(235,0,70,0.16) 217px 218px,rgba(235,0,70,0.18) 218px 219px,rgba(235,0,70,0.0) 219px 220px,rgba(235,0,70,0.24) 220px 221px,rgba(235,0,70,0.13) 221px 222px,rgba(235,0,70,0.05) 222px 223px,rgba(235,0,70,0.0) 223px 224px,rgba(235,0,70,0.13) 224px 225px,rgba(235,0,70,0.12) 225px 226px,rgba(235,0,70,0.04) 226px 227px,rgba(235,0,70,0.0) 227px 228px,rgba(235,0,70,0.16) 228px 229px,rgba(235,0,70,0.04) 229px 230px,rgba(235,0,70,0.05) 230px 231px,rgba(235,0,70,0.28) 231px 232px,rgba(235,0,70,0.23) 232px 233px,rgba(235,0,70,0.15) 233px 234px,rgba(235,0,70,0.05) 234px 235px,rgba(235,0,70,0.13) 235px 236px,rgba(235,0,70,0.0) 236px 237px,rgba(235,0,70,0.09) 237px 238px,rgba(235,0,70,0.03) 238px 239px,rgba(235,0,70,0.0) 239px 241px,rgba(235,0,70,0.12) 241px 242px,rgba(235,0,70,0.09) 242px 244px,rgba(235,0,70,0.14) 244px 245px,rgba(235,0,70,0.02) 245px 246px,rgba(235,0,70,0.0) 246px 248px,rgba(235,0,70,0.06) 248px 249px,rgba(235,0,70,0.13) 249px 250px,rgba(235,0,70,0.07) 250px 251px,rgba(235,0,70,0.12) 251px 252px,rgba(235,0,70,0.0) 252px 253px,rgba(235,0,70,0.05) 253px 254px,rgba(235,0,70,0.03) 254px 255px,rgba(235,0,70,0.0) 255px 256px,rgba(235,0,70,0.21) 256px 257px,rgba(235,0,70,0.14) 257px 258px,rgba(235,0,70,0.03) 258px 260px,rgba(235,0,70,0.08) 260px 261px,rgba(235,0,70,0.0) 261px 262px,rgba(235,0,70,0.11) 262px 263px,rgba(235,0,70,0.0) 263px 264px,rgba(235,0,70,0.05) 264px 265px,rgba(235,0,70,0.01) 265px 266px,rgba(235,0,70,0.05) 266px 267px,rgba(235,0,70,0.0) 267px 269px,rgba(235,0,70,0.01) 269px 270px,rgba(235,0,70,0.03) 270px 271px,rgba(235,0,70,0.06) 271px 272px,rgba(235,0,70,0.08) 272px 273px,rgba(235,0,70,0.19) 273px 274px,rgba(235,0,70,0.14) 274px 275px,rgba(235,0,70,0.06) 275px 276px,rgba(235,0,70,0.13) 276px 277px,rgba(235,0,70,0.03) 277px 278px,rgba(235,0,70,0.18) 278px 279px,rgba(235,0,70,0.12) 279px 280px,rgba(235,0,70,0.0) 280px 281px,rgba(235,0,70,0.13) 281px 282px,rgba(235,0,70,0.14) 282px 283px,rgba(235,0,70,0.0) 283px 284px,rgba(235,0,70,0.03) 284px 285px,rgba(235,0,70,0.05) 285px 286px,rgba(235,0,70,0.0) 286px 287px,rgba(235,0,70,0.01) 287px 289px,rgba(235,0,70,0.12) 289px 290px,rgba(235,0,70,0.1) 290px 291px,rgba(235,0,70,0.26) 291px 292px,rgba(235,0,70,0.05) 292px 293px,rgba(235,0,70,0.16) 293px 294px,rgba(235,0,70,0.09) 294px 295px,rgba(235,0,70,0.1) 295px 296px,rgba(235,0,70,0.0) 296px 298px,rgba(235,0,70,0.03) 298px 299px,rgba(235,0,70,0.13) 299px 300px,rgba(235,0,70,0.19) 300px 301px,rgba(235,0,70,0.12) 301px 302px,rgba(235,0,70,0.11) 302px 303px,rgba(235,0,70,0.02) 303px 304px,rgba(235,0,70,0.19) 304px 305px,rgba(235,0,70,0.17) 305px 306px,rgba(235,0,70,0.04) 306px 307px,rgba(235,0,70,0.08) 307px 308px,rgba(235,0,70,0.01) 308px 309px,rgba(235,0,70,0.18) 309px 310px,rgba(235,0,70,0.11) 310px 311px,rgba(235,0,70,0.07) 311px 312px,rgba(235,0,70,0.11) 312px 314px,rgba(235,0,70,0.05) 314px 315px,rgba(235,0,70,0.0) 315px 318px,rgba(235,0,70,0.11) 318px 319px,rgba(235,0,70,0.24) 319px 320px,rgba(235,0,70,0.0) 320px 321px,rgba(235,0,70,0.09) 321px 322px,rgba(235,0,70,0.11) 322px 323px,rgba(235,0,70,0.01) 323px 324px,rgba(235,0,70,0.09) 324px 325px,rgba(235,0,70,0.0) 325px 326px,rgba(235,0,70,0.16) 326px 327px,rgba(235,0,70,0.04) 327px 328px,rgba(235,0,70,0.09) 328px 329px,rgba(235,0,70,0.13) 329px 330px,rgba(235,0,70,0.05) 330px 331px,rgba(235,0,70,0.0) 331px 332px,rgba(235,0,70,0.04) 332px 333px,rgba(235,0,70,0.13) 333px 334px,rgba(235,0,70,0.07) 334px 335px,rgba(235,0,70,0.1) 335px 336px,rgba(235,0,70,0.0) 336px 337px,rgba(235,0,70,0.09) 337px 338px,rgba(235,0,70,0.13) 338px 339px,rgba(235,0,70,0.08) 339px 340px,rgba(235,0,70,0.21) 340px 341px,rgba(235,0,70,0.07) 341px 342px,rgba(235,0,70,0.01) 342px 343px,rgba(235,0,70,0.0) 343px 344px,rgba(235,0,70,0.16) 344px 345px,rgba(235,0,70,0.08) 345px 346px,rgba(235,0,70,0.15) 346px 347px,rgba(235,0,70,0.11) 347px 348px,rgba(235,0,70,0.19) 348px 349px,rgba(235,0,70,0.17) 349px 350px,rgba(235,0,70,0.05) 350px 351px,rgba(235,0,70,0.1) 351px 352px,rgba(235,0,70,0.16) 352px 353px,rgba(235,0,70,0.0) 353px 354px,rgba(235,0,70,0.18) 354px 355px,rgba(235,0,70,0.16) 355px 356px,rgba(235,0,70,0.15) 356px 357px,rgba(235,0,70,0.07) 357px 358px,rgba(235,0,70,0.1) 358px 359px,rgba(235,0,70,0.0) 359px 360px,rgba(235,0,70,0.08) 360px 361px,rgba(235,0,70,0.04) 361px 362px,rgba(235,0,70,0.09) 362px 363px,rgba(235,0,70,0.05) 363px 364px,rgba(235,0,70,0.1) 364px 365px,rgba(235,0,70,0.16) 365px 366px,rgba(235,0,70,0.0) 366px 367px,rgba(235,0,70,0.14) 367px 368px,rgba(235,0,70,0.0) 368px 370px,rgba(235,0,70,0.07) 370px 371px,rgba(235,0,70,0.08) 371px 372px,rgba(235,0,70,0.11) 372px 373px,rgba(235,0,70,0.0) 373px 374px,rgba(235,0,70,0.08) 374px 375px,rgba(235,0,70,0.09) 375px 376px,rgba(235,0,70,0.17) 376px 377px,rgba(235,0,70,0.07) 377px 378px,rgba(235,0,70,0.12) 378px 379px,rgba(235,0,70,0.01) 379px 380px,rgba(235,0,70,0.07) 380px 381px,rgba(235,0,70,0.05) 381px 382px,rgba(235,0,70,0.13) 382px 383px,rgba(235,0,70,0.01) 383px 384px,rgba(235,0,70,0.02) 384px 385px,rgba(235,0,70,0.12) 385px 386px,rgba(235,0,70,0.21) 386px 387px,rgba(235,0,70,0.11) 387px 388px,rgba(235,0,70,0.1) 388px 389px,rgba(235,0,70,0.06) 389px 390px,rgba(235,0,70,0.16) 390px 391px,rgba(235,0,70,0.12) 391px 392px,rgba(235,0,70,0.2) 392px 393px,rgba(235,0,70,0.1) 393px 394px,rgba(235,0,70,0.01) 394px 395px,rgba(235,0,70,0.04) 395px 396px,rgba(235,0,70,0.01) 396px 397px,rgba(235,0,70,0.0) 397px 398px,rgba(235,0,70,0.17) 398px 399px,rgba(235,0,70,0.14) 399px 400px,rgba(235,0,70,0.0) 400px 401px,rgba(235,0,70,0.2) 401px 402px,rgba(235,0,70,0.1) 402px 403px,rgba(235,0,70,0.01) 403px 404px,rgba(235,0,70,0.11) 404px 405px,rgba(235,0,70,0.08) 405px 406px,rgba(235,0,70,0.03) 406px 407px,rgba(235,0,70,0.0) 407px 408px,rgba(235,0,70,0.08) 408px 409px,rgba(235,0,70,0.1) 409px 410px,rgba(235,0,70,0.0) 410px 411px,rgba(235,0,70,0.12) 411px 413px,rgba(235,0,70,0.05) 413px 414px,rgba(235,0,70,0.09) 414px 415px,rgba(235,0,70,0.06) 415px 416px,rgba(235,0,70,0.02) 416px 417px,rgba(235,0,70,0.05) 417px 418px,rgba(235,0,70,0.17) 418px 419px,rgba(235,0,70,0.0) 419px 420px,rgba(235,0,70,0.1) 420px 421px,rgba(235,0,70,0.09) 421px 422px,rgba(235,0,70,0.03) 422px 423px,rgba(235,0,70,0.05) 423px 424px,rgba(235,0,70,0.0) 424px 425px,rgba(235,0,70,0.02) 425px 426px,rgba(235,0,70,0.08) 426px 427px,rgba(235,0,70,0.1) 427px 428px,rgba(235,0,70,0.02) 428px 429px,rgba(235,0,70,0.29) 429px 430px,rgba(235,0,70,0.04) 430px 431px);-webkit-mask-image:linear-gradient(transparent 45%,rgba(0,0,0,.6) 80%,#000)"></div>
<div class="a" style="left:141px;top:285.8px;width:431px;height:54.2px;background:linear-gradient(90deg,rgba(0,0,30,0.12) 0px 1px,rgba(0,0,30,0.0) 1px 2px,rgba(0,0,30,0.03) 2px 3px,rgba(0,0,30,0.72) 3px 5px,rgba(0,0,30,0.74) 5px 6px,rgba(0,0,30,0.63) 6px 7px,rgba(0,0,30,0.74) 7px 8px,rgba(0,0,30,0.7) 8px 9px,rgba(0,0,30,0.95) 9px 10px,rgba(0,0,30,0.76) 10px 11px,rgba(0,0,30,0.73) 11px 13px,rgba(0,0,30,0.71) 13px 14px,rgba(0,0,30,0.69) 14px 15px,rgba(0,0,30,0.01) 15px 16px,rgba(0,0,30,0.06) 16px 17px,rgba(0,0,30,0.02) 17px 18px,rgba(0,0,30,0.09) 18px 19px,rgba(0,0,30,0.02) 19px 20px,rgba(0,0,30,0.03) 20px 21px,rgba(0,0,30,0.79) 21px 22px,rgba(0,0,30,0.73) 22px 23px,rgba(0,0,30,0.67) 23px 24px,rgba(0,0,30,0.69) 24px 25px,rgba(0,0,30,0.73) 25px 26px,rgba(0,0,30,0.82) 26px 27px,rgba(0,0,30,0.68) 27px 28px,rgba(0,0,30,0.69) 28px 29px,rgba(0,0,30,0.11) 29px 30px,rgba(0,0,30,0.0) 30px 31px,rgba(0,0,30,0.03) 31px 32px,rgba(0,0,30,0.7) 32px 33px,rgba(0,0,30,0.68) 33px 34px,rgba(0,0,30,0.66) 34px 35px,rgba(0,0,30,0.69) 35px 36px,rgba(0,0,30,0.48) 36px 37px,rgba(0,0,30,0.71) 37px 38px,rgba(0,0,30,0.59) 38px 39px,rgba(0,0,30,0.55) 39px 40px,rgba(0,0,30,0.67) 40px 41px,rgba(0,0,30,0.69) 41px 42px,rgba(0,0,30,0.02) 42px 43px,rgba(0,0,30,0.0) 43px 44px,rgba(0,0,30,0.05) 44px 46px,rgba(0,0,30,0.13) 46px 47px,rgba(0,0,30,0.09) 47px 48px,rgba(0,0,30,0.06) 48px 49px,rgba(0,0,30,0.37) 49px 50px,rgba(0,0,30,0.29) 50px 51px,rgba(0,0,30,0.24) 51px 52px,rgba(0,0,30,0.34) 52px 53px,rgba(0,0,30,0.33) 53px 54px,rgba(0,0,30,0.29) 54px 55px,rgba(0,0,30,0.25) 55px 56px,rgba(0,0,30,0.31) 56px 57px,rgba(0,0,30,0.15) 57px 58px,rgba(0,0,30,0.34) 58px 59px,rgba(0,0,30,0.33) 59px 60px,rgba(0,0,30,0.2) 60px 61px,rgba(0,0,30,0.3) 61px 62px,rgba(0,0,30,0.24) 62px 63px,rgba(0,0,30,0.35) 63px 64px,rgba(0,0,30,0.18) 64px 65px,rgba(0,0,30,0.25) 65px 66px,rgba(0,0,30,0.34) 66px 67px,rgba(0,0,30,0.19) 67px 68px,rgba(0,0,30,0.0) 68px 69px,rgba(0,0,30,0.09) 69px 70px,rgba(0,0,30,0.14) 70px 71px,rgba(0,0,30,0.08) 71px 72px,rgba(0,0,30,0.22) 72px 73px,rgba(0,0,30,0.05) 73px 74px,rgba(0,0,30,0.14) 74px 75px,rgba(0,0,30,0.06) 75px 76px,rgba(0,0,30,0.2) 76px 77px,rgba(0,0,30,0.12) 77px 78px,rgba(0,0,30,0.1) 78px 79px,rgba(0,0,30,0.02) 79px 80px,rgba(0,0,30,0.22) 80px 81px,rgba(0,0,30,0.17) 81px 83px,rgba(0,0,30,0.19) 83px 84px,rgba(0,0,30,0.14) 84px 85px,rgba(0,0,30,0.08) 85px 86px,rgba(0,0,30,0.07) 86px 88px,rgba(0,0,30,0.2) 88px 89px,rgba(0,0,30,0.03) 89px 90px,rgba(0,0,30,0.08) 90px 91px,rgba(0,0,30,0.1) 91px 92px,rgba(0,0,30,0.13) 92px 93px,rgba(0,0,30,0.15) 93px 94px,rgba(0,0,30,0.05) 94px 95px,rgba(0,0,30,0.02) 95px 96px,rgba(0,0,30,0.12) 96px 97px,rgba(0,0,30,0.19) 97px 98px,rgba(0,0,30,0.17) 98px 99px,rgba(0,0,30,0.07) 99px 100px,rgba(0,0,30,0.04) 100px 101px,rgba(0,0,30,0.08) 101px 102px,rgba(0,0,30,0.05) 102px 103px,rgba(0,0,30,0.11) 103px 104px,rgba(0,0,30,0.01) 104px 105px,rgba(0,0,30,0.07) 105px 106px,rgba(0,0,30,0.05) 106px 107px,rgba(0,0,30,0.09) 107px 108px,rgba(0,0,30,0.07) 108px 109px,rgba(0,0,30,0.21) 109px 110px,rgba(0,0,30,0.15) 110px 112px,rgba(0,0,30,0.0) 112px 113px,rgba(0,0,30,0.04) 113px 114px,rgba(0,0,30,0.02) 114px 115px,rgba(0,0,30,0.09) 115px 116px,rgba(0,0,30,0.0) 116px 117px,rgba(0,0,30,0.13) 117px 118px,rgba(0,0,30,0.12) 118px 119px,rgba(0,0,30,0.0) 119px 121px,rgba(0,0,30,0.01) 121px 122px,rgba(0,0,30,0.06) 122px 123px,rgba(0,0,30,0.1) 123px 124px,rgba(0,0,30,0.18) 124px 125px,rgba(0,0,30,0.05) 125px 126px,rgba(0,0,30,0.11) 126px 127px,rgba(0,0,30,0.07) 127px 128px,rgba(0,0,30,0.17) 128px 129px,rgba(0,0,30,0.1) 129px 130px,rgba(0,0,30,0.14) 130px 131px,rgba(0,0,30,0.0) 131px 132px,rgba(0,0,30,0.05) 132px 133px,rgba(0,0,30,0.01) 133px 134px,rgba(0,0,30,0.15) 134px 135px,rgba(0,0,30,0.1) 135px 136px,rgba(0,0,30,0.04) 136px 137px,rgba(0,0,30,0.03) 137px 138px,rgba(0,0,30,0.09) 138px 139px,rgba(0,0,30,0.02) 139px 140px,rgba(0,0,30,0.0) 140px 141px,rgba(0,0,30,0.09) 141px 142px,rgba(0,0,30,0.21) 142px 143px,rgba(0,0,30,0.05) 143px 144px,rgba(0,0,30,0.03) 144px 145px,rgba(0,0,30,0.0) 145px 147px,rgba(0,0,30,0.09) 147px 148px,rgba(0,0,30,0.11) 148px 149px,rgba(0,0,30,0.06) 149px 150px,rgba(0,0,30,0.08) 150px 151px,rgba(0,0,30,0.07) 151px 153px,rgba(0,0,30,0.0) 153px 154px,rgba(0,0,30,0.03) 154px 155px,rgba(0,0,30,0.07) 155px 156px,rgba(0,0,30,0.01) 156px 157px,rgba(0,0,30,0.03) 157px 158px,rgba(0,0,30,0.01) 158px 159px,rgba(0,0,30,0.04) 159px 160px,rgba(0,0,30,0.11) 160px 161px,rgba(0,0,30,0.04) 161px 162px,rgba(0,0,30,0.05) 162px 163px,rgba(0,0,30,0.11) 163px 164px,rgba(0,0,30,0.1) 164px 165px,rgba(0,0,30,0.16) 165px 166px,rgba(0,0,30,0.0) 166px 167px,rgba(0,0,30,0.11) 167px 168px,rgba(0,0,30,0.03) 168px 169px,rgba(0,0,30,0.07) 169px 170px,rgba(0,0,30,0.11) 170px 171px,rgba(0,0,30,0.12) 171px 173px,rgba(0,0,30,0.07) 173px 174px,rgba(0,0,30,0.16) 174px 175px,rgba(0,0,30,0.04) 175px 176px,rgba(0,0,30,0.05) 176px 177px,rgba(0,0,30,0.11) 177px 178px,rgba(0,0,30,0.03) 178px 179px,rgba(0,0,30,0.19) 179px 180px,rgba(0,0,30,0.12) 180px 181px,rgba(0,0,30,0.19) 181px 182px,rgba(0,0,30,0.06) 182px 183px,rgba(0,0,30,0.04) 183px 184px,rgba(0,0,30,0.07) 184px 185px,rgba(0,0,30,0.1) 185px 186px,rgba(0,0,30,0.02) 186px 187px,rgba(0,0,30,0.08) 187px 188px,rgba(0,0,30,0.06) 188px 189px,rgba(0,0,30,0.16) 189px 190px,rgba(0,0,30,0.02) 190px 191px,rgba(0,0,30,0.12) 191px 192px,rgba(0,0,30,0.02) 192px 193px,rgba(0,0,30,0.0) 193px 194px,rgba(0,0,30,0.02) 194px 195px,rgba(0,0,30,0.0) 195px 196px,rgba(0,0,30,0.07) 196px 197px,rgba(0,0,30,0.12) 197px 198px,rgba(0,0,30,0.07) 198px 199px,rgba(0,0,30,0.1) 199px 200px,rgba(0,0,30,0.16) 200px 201px,rgba(0,0,30,0.08) 201px 202px,rgba(0,0,30,0.07) 202px 203px,rgba(0,0,30,0.04) 203px 204px,rgba(0,0,30,0.0) 204px 205px,rgba(0,0,30,0.11) 205px 206px,rgba(0,0,30,0.0) 206px 207px,rgba(0,0,30,0.1) 207px 208px,rgba(0,0,30,0.06) 208px 209px,rgba(0,0,30,0.13) 209px 210px,rgba(0,0,30,0.06) 210px 211px,rgba(0,0,30,0.01) 211px 212px,rgba(0,0,30,0.08) 212px 213px,rgba(0,0,30,0.03) 213px 214px,rgba(0,0,30,0.05) 214px 215px,rgba(0,0,30,0.06) 215px 216px,rgba(0,0,30,0.05) 216px 218px,rgba(0,0,30,0.01) 218px 219px,rgba(0,0,30,0.14) 219px 220px,rgba(0,0,30,0.02) 220px 221px,rgba(0,0,30,0.14) 221px 222px,rgba(0,0,30,0.08) 222px 223px,rgba(0,0,30,0.22) 223px 224px,rgba(0,0,30,0.23) 224px 225px,rgba(0,0,30,0.03) 225px 226px,rgba(0,0,30,0.16) 226px 227px,rgba(0,0,30,0.14) 227px 228px,rgba(0,0,30,0.09) 228px 229px,rgba(0,0,30,0.18) 229px 230px,rgba(0,0,30,0.12) 230px 231px,rgba(0,0,30,0.04) 231px 232px,rgba(0,0,30,0.13) 232px 233px,rgba(0,0,30,0.14) 233px 234px,rgba(0,0,30,0.16) 234px 235px,rgba(0,0,30,0.08) 235px 236px,rgba(0,0,30,0.19) 236px 238px,rgba(0,0,30,0.08) 238px 239px,rgba(0,0,30,0.11) 239px 240px,rgba(0,0,30,0.15) 240px 241px,rgba(0,0,30,0.12) 241px 242px,rgba(0,0,30,0.25) 242px 243px,rgba(0,0,30,0.16) 243px 244px,rgba(0,0,30,0.09) 244px 245px,rgba(0,0,30,0.1) 245px 246px,rgba(0,0,30,0.15) 246px 247px,rgba(0,0,30,0.29) 247px 248px,rgba(0,0,30,0.14) 248px 249px,rgba(0,0,30,0.16) 249px 250px,rgba(0,0,30,0.18) 250px 251px,rgba(0,0,30,0.15) 251px 252px,rgba(0,0,30,0.29) 252px 253px,rgba(0,0,30,0.12) 253px 254px,rgba(0,0,30,0.19) 254px 255px,rgba(0,0,30,0.16) 255px 256px,rgba(0,0,30,0.19) 256px 257px,rgba(0,0,30,0.08) 257px 258px,rgba(0,0,30,0.26) 258px 259px,rgba(0,0,30,0.05) 259px 260px,rgba(0,0,30,0.06) 260px 261px,rgba(0,0,30,0.0) 261px 262px,rgba(0,0,30,0.02) 262px 263px,rgba(0,0,30,0.09) 263px 264px,rgba(0,0,30,0.12) 264px 265px,rgba(0,0,30,0.11) 265px 266px,rgba(0,0,30,0.13) 266px 267px,rgba(0,0,30,0.1) 267px 268px,rgba(0,0,30,0.06) 268px 269px,rgba(0,0,30,0.11) 269px 270px,rgba(0,0,30,0.1) 270px 271px,rgba(0,0,30,0.05) 271px 272px,rgba(0,0,30,0.1) 272px 273px,rgba(0,0,30,0.14) 273px 274px,rgba(0,0,30,0.07) 274px 275px,rgba(0,0,30,0.04) 275px 276px,rgba(0,0,30,0.1) 276px 277px,rgba(0,0,30,0.17) 277px 278px,rgba(0,0,30,0.05) 278px 281px,rgba(0,0,30,0.13) 281px 282px,rgba(0,0,30,0.0) 282px 283px,rgba(0,0,30,0.08) 283px 284px,rgba(0,0,30,0.13) 284px 285px,rgba(0,0,30,0.01) 285px 286px,rgba(0,0,30,0.15) 286px 287px,rgba(0,0,30,0.09) 287px 288px,rgba(0,0,30,0.03) 288px 289px,rgba(0,0,30,0.07) 289px 290px,rgba(0,0,30,0.0) 290px 291px,rgba(0,0,30,0.03) 291px 292px,rgba(0,0,30,0.17) 292px 293px,rgba(0,0,30,0.01) 293px 294px,rgba(0,0,30,0.17) 294px 295px,rgba(0,0,30,0.06) 295px 296px,rgba(0,0,30,0.12) 296px 297px,rgba(0,0,30,0.06) 297px 298px,rgba(0,0,30,0.0) 298px 299px,rgba(0,0,30,0.03) 299px 300px,rgba(0,0,30,0.07) 300px 301px,rgba(0,0,30,0.0) 301px 303px,rgba(0,0,30,0.08) 303px 304px,rgba(0,0,30,0.02) 304px 305px,rgba(0,0,30,0.0) 305px 306px,rgba(0,0,30,0.02) 306px 307px,rgba(0,0,30,0.11) 307px 308px,rgba(0,0,30,0.03) 308px 309px,rgba(0,0,30,0.12) 309px 310px,rgba(0,0,30,0.15) 310px 311px,rgba(0,0,30,0.06) 311px 312px,rgba(0,0,30,0.0) 312px 314px,rgba(0,0,30,0.22) 314px 315px,rgba(0,0,30,0.27) 315px 316px,rgba(0,0,30,0.24) 316px 317px,rgba(0,0,30,0.25) 317px 318px,rgba(0,0,30,0.19) 318px 319px,rgba(0,0,30,0.24) 319px 320px,rgba(0,0,30,0.19) 320px 321px,rgba(0,0,30,0.2) 321px 322px,rgba(0,0,30,0.14) 322px 323px,rgba(0,0,30,0.13) 323px 324px,rgba(0,0,30,0.19) 324px 325px,rgba(0,0,30,0.15) 325px 326px,rgba(0,0,30,0.16) 326px 327px,rgba(0,0,30,0.26) 327px 328px,rgba(0,0,30,0.21) 328px 329px,rgba(0,0,30,0.39) 329px 330px,rgba(0,0,30,0.28) 330px 331px,rgba(0,0,30,0.18) 331px 332px,rgba(0,0,30,0.27) 332px 333px,rgba(0,0,30,0.24) 333px 334px,rgba(0,0,30,0.18) 334px 335px,rgba(0,0,30,0.29) 335px 336px,rgba(0,0,30,0.17) 336px 337px,rgba(0,0,30,0.04) 337px 338px,rgba(0,0,30,0.27) 338px 339px,rgba(0,0,30,0.18) 339px 340px,rgba(0,0,30,0.31) 340px 341px,rgba(0,0,30,0.18) 341px 342px,rgba(0,0,30,0.15) 342px 343px,rgba(0,0,30,0.31) 343px 344px,rgba(0,0,30,0.16) 344px 345px,rgba(0,0,30,0.23) 345px 346px,rgba(0,0,30,0.31) 346px 347px,rgba(0,0,30,0.23) 347px 348px,rgba(0,0,30,0.22) 348px 349px,rgba(0,0,30,0.23) 349px 350px,rgba(0,0,30,0.27) 350px 351px,rgba(0,0,30,0.17) 351px 352px,rgba(0,0,30,0.26) 352px 353px,rgba(0,0,30,0.25) 353px 354px,rgba(0,0,30,0.36) 354px 355px,rgba(0,0,30,0.2) 355px 356px,rgba(0,0,30,0.17) 356px 357px,rgba(0,0,30,0.26) 357px 358px,rgba(0,0,30,0.2) 358px 359px,rgba(0,0,30,0.24) 359px 360px,rgba(0,0,30,0.23) 360px 361px,rgba(0,0,30,0.29) 361px 362px,rgba(0,0,30,0.18) 362px 363px,rgba(0,0,30,0.21) 363px 364px,rgba(0,0,30,0.07) 364px 365px,rgba(0,0,30,0.17) 365px 366px,rgba(0,0,30,0.31) 366px 367px,rgba(0,0,30,0.18) 367px 369px,rgba(0,0,30,0.15) 369px 370px,rgba(0,0,30,0.25) 370px 371px,rgba(0,0,30,0.23) 371px 372px,rgba(0,0,30,0.15) 372px 373px,rgba(0,0,30,0.26) 373px 374px,rgba(0,0,30,0.24) 374px 375px,rgba(0,0,30,0.27) 375px 376px,rgba(0,0,30,0.18) 376px 377px,rgba(0,0,30,0.32) 377px 378px,rgba(0,0,30,0.24) 378px 379px,rgba(0,0,30,0.05) 379px 380px,rgba(0,0,30,0.03) 380px 381px,rgba(0,0,30,0.05) 381px 382px,rgba(0,0,30,0.11) 382px 383px,rgba(0,0,30,0.04) 383px 384px,rgba(0,0,30,0.12) 384px 385px,rgba(0,0,30,0.09) 385px 386px,rgba(0,0,30,0.14) 386px 387px,rgba(0,0,30,0.11) 387px 388px,rgba(0,0,30,0.06) 388px 389px,rgba(0,0,30,0.0) 389px 390px,rgba(0,0,30,0.08) 390px 391px,rgba(0,0,30,0.11) 391px 392px,rgba(0,0,30,0.07) 392px 393px,rgba(0,0,30,0.09) 393px 394px,rgba(0,0,30,0.03) 394px 395px,rgba(0,0,30,0.04) 395px 396px,rgba(0,0,30,0.0) 396px 397px,rgba(0,0,30,0.14) 397px 398px,rgba(0,0,30,0.07) 398px 399px,rgba(0,0,30,0.12) 399px 400px,rgba(0,0,30,0.07) 400px 401px,rgba(0,0,30,0.14) 401px 402px,rgba(0,0,30,0.24) 402px 403px,rgba(0,0,30,0.18) 403px 404px,rgba(0,0,30,0.11) 404px 405px,rgba(0,0,30,0.24) 405px 407px,rgba(0,0,30,0.21) 407px 408px,rgba(0,0,30,0.2) 408px 409px,rgba(0,0,30,0.22) 409px 410px,rgba(0,0,30,0.18) 410px 411px,rgba(0,0,30,0.2) 411px 412px,rgba(0,0,30,0.1) 412px 413px,rgba(0,0,30,0.24) 413px 414px,rgba(0,0,30,0.16) 414px 415px,rgba(0,0,30,0.27) 415px 416px,rgba(0,0,30,0.03) 416px 417px,rgba(0,0,30,0.19) 417px 418px,rgba(0,0,30,0.21) 418px 419px,rgba(0,0,30,0.13) 419px 420px,rgba(0,0,30,0.18) 420px 421px,rgba(0,0,30,0.19) 421px 422px,rgba(0,0,30,0.18) 422px 423px,rgba(0,0,30,0.12) 423px 424px,rgba(0,0,30,0.14) 424px 425px,rgba(0,0,30,0.21) 425px 426px,rgba(0,0,30,0.23) 426px 427px,rgba(0,0,30,0.16) 427px 428px,rgba(0,0,30,0.15) 428px 429px,rgba(0,0,30,0.16) 429px 430px,rgba(0,0,30,0.21) 430px 431px);-webkit-mask-image:linear-gradient(#000,rgba(0,0,0,.7) 25%,transparent 60%)"></div>
<div class="a" style="left:141px;top:285.8px;width:431px;height:54.2px;background:linear-gradient(90deg,rgba(235,0,70,0.01) 0px 1px,rgba(235,0,70,0.04) 1px 2px,rgba(235,0,70,0.15) 2px 3px,rgba(235,0,70,0.09) 3px 4px,rgba(235,0,70,0.2) 4px 5px,rgba(235,0,70,0.05) 5px 6px,rgba(235,0,70,0.01) 6px 7px,rgba(235,0,70,0.06) 7px 8px,rgba(235,0,70,0.0) 8px 9px,rgba(235,0,70,0.06) 9px 11px,rgba(235,0,70,0.14) 11px 12px,rgba(235,0,70,0.07) 12px 13px,rgba(235,0,70,0.08) 13px 14px,rgba(235,0,70,0.0) 14px 15px,rgba(235,0,70,0.84) 15px 16px,rgba(235,0,70,0.59) 16px 17px,rgba(235,0,70,0.77) 17px 18px,rgba(235,0,70,0.68) 18px 19px,rgba(235,0,70,0.65) 19px 20px,rgba(235,0,70,0.01) 20px 22px,rgba(235,0,70,0.07) 22px 23px,rgba(235,0,70,0.04) 23px 24px,rgba(235,0,70,0.14) 24px 25px,rgba(235,0,70,0.0) 25px 26px,rgba(235,0,70,0.05) 26px 27px,rgba(235,0,70,0.0) 27px 28px,rgba(235,0,70,0.1) 28px 29px,rgba(235,0,70,0.47) 29px 30px,rgba(235,0,70,0.58) 30px 31px,rgba(235,0,70,0.61) 31px 32px,rgba(235,0,70,0.0) 32px 33px,rgba(235,0,70,0.11) 33px 34px,rgba(235,0,70,0.06) 34px 35px,rgba(235,0,70,0.11) 35px 37px,rgba(235,0,70,0.0) 37px 39px,rgba(235,0,70,0.04) 39px 40px,rgba(235,0,70,0.09) 40px 41px,rgba(235,0,70,0.1) 41px 42px,rgba(235,0,70,0.56) 42px 44px,rgba(235,0,70,0.55) 44px 45px,rgba(235,0,70,0.56) 45px 46px,rgba(235,0,70,0.59) 46px 48px,rgba(235,0,70,0.17) 48px 49px,rgba(235,0,70,0.02) 49px 50px,rgba(235,0,70,0.03) 50px 51px,rgba(235,0,70,0.08) 51px 52px,rgba(235,0,70,0.0) 52px 53px,rgba(235,0,70,0.03) 53px 54px,rgba(235,0,70,0.05) 54px 55px,rgba(235,0,70,0.1) 55px 56px,rgba(235,0,70,0.0) 56px 57px,rgba(235,0,70,0.13) 57px 58px,rgba(235,0,70,0.03) 58px 59px,rgba(235,0,70,0.06) 59px 60px,rgba(235,0,70,0.1) 60px 61px,rgba(235,0,70,0.09) 61px 62px,rgba(235,0,70,0.11) 62px 63px,rgba(235,0,70,0.06) 63px 64px,rgba(235,0,70,0.05) 64px 65px,rgba(235,0,70,0.07) 65px 66px,rgba(235,0,70,0.0) 66px 67px,rgba(235,0,70,0.12) 67px 68px,rgba(235,0,70,0.0) 68px 70px,rgba(235,0,70,0.17) 70px 71px,rgba(235,0,70,0.04) 71px 72px,rgba(235,0,70,0.0) 72px 73px,rgba(235,0,70,0.16) 73px 74px,rgba(235,0,70,0.03) 74px 75px,rgba(235,0,70,0.11) 75px 76px,rgba(235,0,70,0.0) 76px 77px,rgba(235,0,70,0.04) 77px 78px,rgba(235,0,70,0.0) 78px 81px,rgba(235,0,70,0.05) 81px 82px,rgba(235,0,70,0.1) 82px 83px,rgba(235,0,70,0.2) 83px 84px,rgba(235,0,70,0.0) 84px 85px,rgba(235,0,70,0.11) 85px 86px,rgba(235,0,70,0.01) 86px 87px,rgba(235,0,70,0.04) 87px 88px,rgba(235,0,70,0.0) 88px 92px,rgba(235,0,70,0.05) 92px 93px,rgba(235,0,70,0.01) 93px 94px,rgba(235,0,70,0.13) 94px 95px,rgba(235,0,70,0.06) 95px 97px,rgba(235,0,70,0.12) 97px 98px,rgba(235,0,70,0.08) 98px 99px,rgba(235,0,70,0.12) 99px 100px,rgba(235,0,70,0.32) 100px 101px,rgba(235,0,70,0.5) 101px 102px,rgba(235,0,70,0.38) 102px 103px,rgba(235,0,70,0.15) 103px 104px,rgba(235,0,70,0.07) 104px 105px,rgba(235,0,70,0.1) 105px 106px,rgba(235,0,70,0.02) 106px 107px,rgba(235,0,70,0.08) 107px 108px,rgba(235,0,70,0.0) 108px 109px,rgba(235,0,70,0.13) 109px 110px,rgba(235,0,70,0.06) 110px 111px,rgba(235,0,70,0.12) 111px 112px,rgba(235,0,70,0.32) 112px 113px,rgba(235,0,70,0.5) 113px 114px,rgba(235,0,70,0.38) 114px 115px,rgba(235,0,70,0.15) 115px 116px,rgba(235,0,70,0.06) 116px 117px,rgba(235,0,70,0.0) 117px 118px,rgba(235,0,70,0.08) 118px 119px,rgba(235,0,70,0.0) 119px 120px,rgba(235,0,70,0.15) 120px 121px,rgba(235,0,70,0.04) 121px 122px,rgba(235,0,70,0.05) 122px 123px,rgba(235,0,70,0.19) 123px 124px,rgba(235,0,70,0.18) 124px 125px,rgba(235,0,70,0.06) 125px 126px,rgba(235,0,70,0.09) 126px 127px,rgba(235,0,70,0.12) 127px 128px,rgba(235,0,70,0.32) 128px 129px,rgba(235,0,70,0.5) 129px 130px,rgba(235,0,70,0.38) 130px 131px,rgba(235,0,70,0.15) 131px 132px,rgba(235,0,70,0.07) 132px 133px,rgba(235,0,70,0.1) 133px 134px,rgba(235,0,70,0.09) 134px 135px,rgba(235,0,70,0.0) 135px 138px,rgba(235,0,70,0.03) 138px 139px,rgba(235,0,70,0.13) 139px 140px,rgba(235,0,70,0.0) 140px 141px,rgba(235,0,70,0.12) 141px 142px,rgba(235,0,70,0.11) 142px 143px,rgba(235,0,70,0.05) 143px 146px,rgba(235,0,70,0.0) 146px 147px,rgba(235,0,70,0.03) 147px 148px,rgba(235,0,70,0.05) 148px 149px,rgba(235,0,70,0.09) 149px 150px,rgba(235,0,70,0.1) 150px 151px,rgba(235,0,70,0.01) 151px 152px,rgba(235,0,70,0.12) 152px 153px,rgba(235,0,70,0.32) 153px 154px,rgba(235,0,70,0.5) 154px 155px,rgba(235,0,70,0.38) 155px 156px,rgba(235,0,70,0.15) 156px 157px,rgba(235,0,70,0.04) 157px 158px,rgba(235,0,70,0.07) 158px 159px,rgba(235,0,70,0.02) 159px 160px,rgba(235,0,70,0.01) 160px 161px,rgba(235,0,70,0.04) 161px 162px,rgba(235,0,70,0.11) 162px 163px,rgba(235,0,70,0.04) 163px 164px,rgba(235,0,70,0.16) 164px 165px,rgba(235,0,70,0.06) 165px 166px,rgba(235,0,70,0.0) 166px 167px,rgba(235,0,70,0.02) 167px 168px,rgba(235,0,70,0.15) 168px 169px,rgba(235,0,70,0.05) 169px 170px,rgba(235,0,70,0.12) 170px 171px,rgba(235,0,70,0.32) 171px 172px,rgba(235,0,70,0.5) 172px 173px,rgba(235,0,70,0.38) 173px 174px,rgba(235,0,70,0.15) 174px 175px,rgba(235,0,70,0.08) 175px 176px,rgba(235,0,70,0.14) 176px 177px,rgba(235,0,70,0.1) 177px 178px,rgba(235,0,70,0.0) 178px 179px,rgba(235,0,70,0.1) 179px 180px,rgba(235,0,70,0.06) 180px 181px,rgba(235,0,70,0.04) 181px 182px,rgba(235,0,70,0.1) 182px 183px,rgba(235,0,70,0.05) 183px 184px,rgba(235,0,70,0.12) 184px 185px,rgba(235,0,70,0.32) 185px 186px,rgba(235,0,70,0.5) 186px 187px,rgba(235,0,70,0.38) 187px 188px,rgba(235,0,70,0.15) 188px 189px,rgba(235,0,70,0.06) 189px 190px,rgba(235,0,70,0.0) 190px 191px,rgba(235,0,70,0.07) 191px 192px,rgba(235,0,70,0.04) 192px 193px,rgba(235,0,70,0.03) 193px 194px,rgba(235,0,70,0.0) 194px 195px,rgba(235,0,70,0.01) 195px 196px,rgba(235,0,70,0.12) 196px 197px,rgba(235,0,70,0.13) 197px 198px,rgba(235,0,70,0.08) 198px 199px,rgba(235,0,70,0.05) 199px 200px,rgba(235,0,70,0.0) 200px 201px,rgba(235,0,70,0.09) 201px 202px,rgba(235,0,70,0.15) 202px 203px,rgba(235,0,70,0.0) 203px 204px,rgba(235,0,70,0.12) 204px 205px,rgba(235,0,70,0.0) 205px 206px,rgba(235,0,70,0.03) 206px 207px,rgba(235,0,70,0.07) 207px 208px,rgba(235,0,70,0.0) 208px 210px,rgba(235,0,70,0.06) 210px 211px,rgba(235,0,70,0.1) 211px 212px,rgba(235,0,70,0.02) 212px 213px,rgba(235,0,70,0.13) 213px 214px,rgba(235,0,70,0.12) 214px 215px,rgba(235,0,70,0.32) 215px 216px,rgba(235,0,70,0.5) 216px 217px,rgba(235,0,70,0.38) 217px 218px,rgba(235,0,70,0.15) 218px 219px,rgba(235,0,70,0.07) 219px 220px,rgba(235,0,70,0.16) 220px 221px,rgba(235,0,70,0.18) 221px 222px,rgba(235,0,70,0.08) 222px 223px,rgba(235,0,70,0.04) 223px 224px,rgba(235,0,70,0.12) 224px 225px,rgba(235,0,70,0.32) 225px 226px,rgba(235,0,70,0.5) 226px 227px,rgba(235,0,70,0.38) 227px 228px,rgba(235,0,70,0.15) 228px 229px,rgba(235,0,70,0.05) 229px 230px,rgba(235,0,70,0.08) 230px 231px,rgba(235,0,70,0.0) 231px 233px,rgba(235,0,70,0.12) 233px 234px,rgba(235,0,70,0.1) 234px 235px,rgba(235,0,70,0.02) 235px 236px,rgba(235,0,70,0.13) 236px 237px,rgba(235,0,70,0.01) 237px 238px,rgba(235,0,70,0.03) 238px 239px,rgba(235,0,70,0.0) 239px 240px,rgba(235,0,70,0.1) 240px 241px,rgba(235,0,70,0.05) 241px 242px,rgba(235,0,70,0.11) 242px 243px,rgba(235,0,70,0.09) 243px 244px,rgba(235,0,70,0.06) 244px 246px,rgba(235,0,70,0.12) 246px 247px,rgba(235,0,70,0.04) 247px 249px,rgba(235,0,70,0.05) 249px 250px,rgba(235,0,70,0.1) 250px 251px,rgba(235,0,70,0.11) 251px 252px,rgba(235,0,70,0.17) 252px 253px,rgba(235,0,70,0.05) 253px 254px,rgba(235,0,70,0.13) 254px 255px,rgba(235,0,70,0.01) 255px 256px,rgba(235,0,70,0.09) 256px 257px,rgba(235,0,70,0.06) 257px 258px,rgba(235,0,70,0.16) 258px 259px,rgba(235,0,70,0.09) 259px 260px,rgba(235,0,70,0.03) 260px 261px,rgba(235,0,70,0.09) 261px 262px,rgba(235,0,70,0.07) 262px 263px,rgba(235,0,70,0.03) 263px 264px,rgba(235,0,70,0.04) 264px 265px,rgba(235,0,70,0.12) 265px 266px,rgba(235,0,70,0.32) 266px 267px,rgba(235,0,70,0.5) 267px 268px,rgba(235,0,70,0.38) 268px 269px,rgba(235,0,70,0.15) 269px 270px,rgba(235,0,70,0.0) 270px 271px,rgba(235,0,70,0.04) 271px 273px,rgba(235,0,70,0.1) 273px 274px,rgba(235,0,70,0.0) 274px 275px,rgba(235,0,70,0.09) 275px 276px,rgba(235,0,70,0.14) 276px 277px,rgba(235,0,70,0.0) 277px 278px,rgba(235,0,70,0.11) 278px 279px,rgba(235,0,70,0.0) 279px 280px,rgba(235,0,70,0.12) 280px 281px,rgba(235,0,70,0.32) 281px 282px,rgba(235,0,70,0.5) 282px 283px,rgba(235,0,70,0.38) 283px 284px,rgba(235,0,70,0.15) 284px 285px,rgba(235,0,70,0.12) 285px 286px,rgba(235,0,70,0.0) 286px 287px,rgba(235,0,70,0.05) 287px 288px,rgba(235,0,70,0.0) 288px 289px,rgba(235,0,70,0.01) 289px 290px,rgba(235,0,70,0.09) 290px 291px,rgba(235,0,70,0.1) 291px 292px,rgba(235,0,70,0.21) 292px 293px,rgba(235,0,70,0.14) 293px 294px,rgba(235,0,70,0.13) 294px 295px,rgba(235,0,70,0.12) 295px 296px,rgba(235,0,70,0.32) 296px 297px,rgba(235,0,70,0.5) 297px 298px,rgba(235,0,70,0.38) 298px 299px,rgba(235,0,70,0.15) 299px 300px,rgba(235,0,70,0.01) 300px 301px,rgba(235,0,70,0.0) 301px 302px,rgba(235,0,70,0.03) 302px 303px,rgba(235,0,70,0.11) 303px 304px,rgba(235,0,70,0.13) 304px 305px,rgba(235,0,70,0.03) 305px 306px,rgba(235,0,70,0.08) 306px 307px,rgba(235,0,70,0.05) 307px 308px,rgba(235,0,70,0.0) 308px 309px,rgba(235,0,70,0.06) 309px 310px,rgba(235,0,70,0.05) 310px 311px,rgba(235,0,70,0.0) 311px 312px,rgba(235,0,70,0.12) 312px 313px,rgba(235,0,70,0.0) 313px 314px,rgba(235,0,70,0.07) 314px 315px,rgba(235,0,70,0.0) 315px 317px,rgba(235,0,70,0.01) 317px 318px,rgba(235,0,70,0.09) 318px 319px,rgba(235,0,70,0.0) 319px 320px,rgba(235,0,70,0.04) 320px 321px,rgba(235,0,70,0.14) 321px 322px,rgba(235,0,70,0.01) 322px 323px,rgba(235,0,70,0.05) 323px 324px,rgba(235,0,70,0.09) 324px 325px,rgba(235,0,70,0.02) 325px 326px,rgba(235,0,70,0.08) 326px 327px,rgba(235,0,70,0.01) 327px 328px,rgba(235,0,70,0.09) 328px 329px,rgba(235,0,70,0.05) 329px 330px,rgba(235,0,70,0.0) 330px 331px,rgba(235,0,70,0.14) 331px 332px,rgba(235,0,70,0.05) 332px 333px,rgba(235,0,70,0.03) 333px 334px,rgba(235,0,70,0.0) 334px 335px,rgba(235,0,70,0.02) 335px 336px,rgba(235,0,70,0.12) 336px 337px,rgba(235,0,70,0.32) 337px 338px,rgba(235,0,70,0.5) 338px 339px,rgba(235,0,70,0.38) 339px 340px,rgba(235,0,70,0.15) 340px 341px,rgba(235,0,70,0.12) 341px 342px,rgba(235,0,70,0.06) 342px 343px,rgba(235,0,70,0.08) 343px 344px,rgba(235,0,70,0.15) 344px 345px,rgba(235,0,70,0.07) 345px 346px,rgba(235,0,70,0.08) 346px 347px,rgba(235,0,70,0.05) 347px 348px,rgba(235,0,70,0.16) 348px 349px,rgba(235,0,70,0.11) 349px 350px,rgba(235,0,70,0.01) 350px 351px,rgba(235,0,70,0.12) 351px 352px,rgba(235,0,70,0.32) 352px 353px,rgba(235,0,70,0.5) 353px 354px,rgba(235,0,70,0.38) 354px 355px,rgba(235,0,70,0.15) 355px 356px,rgba(235,0,70,0.03) 356px 357px,rgba(235,0,70,0.0) 357px 358px,rgba(235,0,70,0.1) 358px 359px,rgba(235,0,70,0.04) 359px 360px,rgba(235,0,70,0.03) 360px 361px,rgba(235,0,70,0.09) 361px 362px,rgba(235,0,70,0.01) 362px 363px,rgba(235,0,70,0.02) 363px 364px,rgba(235,0,70,0.01) 364px 365px,rgba(235,0,70,0.0) 365px 366px,rgba(235,0,70,0.19) 366px 367px,rgba(235,0,70,0.04) 367px 368px,rgba(235,0,70,0.03) 368px 369px,rgba(235,0,70,0.1) 369px 370px,rgba(235,0,70,0.0) 370px 371px,rgba(235,0,70,0.05) 371px 373px,rgba(235,0,70,0.0) 373px 374px,rgba(235,0,70,0.08) 374px 375px,rgba(235,0,70,0.0) 375px 376px,rgba(235,0,70,0.05) 376px 377px,rgba(235,0,70,0.1) 377px 378px,rgba(235,0,70,0.0) 378px 379px,rgba(235,0,70,0.12) 379px 380px,rgba(235,0,70,0.32) 380px 381px,rgba(235,0,70,0.5) 381px 382px,rgba(235,0,70,0.38) 382px 383px,rgba(235,0,70,0.15) 383px 384px,rgba(235,0,70,0.06) 384px 385px,rgba(235,0,70,0.0) 385px 386px,rgba(235,0,70,0.04) 386px 387px,rgba(235,0,70,0.0) 387px 390px,rgba(235,0,70,0.1) 390px 391px,rgba(235,0,70,0.03) 391px 392px,rgba(235,0,70,0.16) 392px 393px,rgba(235,0,70,0.0) 393px 394px,rgba(235,0,70,0.02) 394px 395px,rgba(235,0,70,0.06) 395px 396px,rgba(235,0,70,0.03) 396px 397px,rgba(235,0,70,0.07) 397px 398px,rgba(235,0,70,0.05) 398px 399px,rgba(235,0,70,0.0) 399px 402px,rgba(235,0,70,0.14) 402px 403px,rgba(235,0,70,0.09) 403px 404px,rgba(235,0,70,0.12) 404px 405px,rgba(235,0,70,0.32) 405px 406px,rgba(235,0,70,0.5) 406px 407px,rgba(235,0,70,0.38) 407px 408px,rgba(235,0,70,0.15) 408px 409px,rgba(235,0,70,0.05) 409px 410px,rgba(235,0,70,0.07) 410px 411px,rgba(235,0,70,0.15) 411px 412px,rgba(235,0,70,0.0) 412px 413px,rgba(235,0,70,0.09) 413px 414px,rgba(235,0,70,0.0) 414px 415px,rgba(235,0,70,0.11) 415px 416px,rgba(235,0,70,0.02) 416px 417px,rgba(235,0,70,0.04) 417px 418px,rgba(235,0,70,0.05) 418px 419px,rgba(235,0,70,0.14) 419px 420px,rgba(235,0,70,0.32) 420px 421px,rgba(235,0,70,0.5) 421px 422px,rgba(235,0,70,0.38) 422px 423px,rgba(235,0,70,0.15) 423px 424px,rgba(235,0,70,0.0) 424px 425px,rgba(235,0,70,0.01) 425px 426px,rgba(235,0,70,0.04) 426px 427px,rgba(235,0,70,0.08) 427px 428px,rgba(235,0,70,0.0) 428px 429px,rgba(235,0,70,0.08) 429px 430px,rgba(235,0,70,0.15) 430px 431px);-webkit-mask-image:linear-gradient(transparent 45%,rgba(0,0,0,.6) 80%,#000)"></div>
<div class="a" style="left:138.0px;top:216px;width:1px;height:14px;background:#dcdcdc"></div>
<div class="tl" style="left:139.2px;top:220.0px">0:00</div>
<div class="a" style="left:163.6px;top:216px;width:1px;height:14px;background:#dcdcdc"></div>
<div class="tl" style="left:164.8px;top:220.0px">0:01</div>
<div class="a" style="left:189.3px;top:216px;width:1px;height:14px;background:#dcdcdc"></div>
<div class="tl" style="left:190.5px;top:220.0px">0:02</div>
<div class="a" style="left:214.9px;top:216px;width:1px;height:14px;background:#dcdcdc"></div>
<div class="tl" style="left:216.1px;top:220.0px">0:03</div>
<div class="a" style="left:240.6px;top:216px;width:1px;height:14px;background:#dcdcdc"></div>
<div class="tl" style="left:241.8px;top:220.0px">0:04</div>
<div class="a" style="left:266.2px;top:216px;width:1px;height:14px;background:#dcdcdc"></div>
<div class="tl" style="left:267.4px;top:220.0px">0:05</div>
<div class="a" style="left:291.8px;top:216px;width:1px;height:14px;background:#dcdcdc"></div>
<div class="tl" style="left:293.0px;top:220.0px">0:06</div>
<div class="a" style="left:317.5px;top:216px;width:1px;height:14px;background:#dcdcdc"></div>
<div class="tl" style="left:318.7px;top:220.0px">0:07</div>
<div class="a" style="left:343.1px;top:216px;width:1px;height:14px;background:#dcdcdc"></div>
<div class="tl" style="left:344.3px;top:220.0px">0:08</div>
<div class="a" style="left:368.8px;top:216px;width:1px;height:14px;background:#dcdcdc"></div>
<div class="tl" style="left:370.0px;top:220.0px">0:09</div>
<div class="a" style="left:394.4px;top:216px;width:1px;height:14px;background:#dcdcdc"></div>
<div class="tl" style="left:395.6px;top:220.0px">0:10</div>
<div class="a" style="left:420.0px;top:216px;width:1px;height:14px;background:#dcdcdc"></div>
<div class="tl" style="left:421.2px;top:220.0px">0:11</div>
<div class="a" style="left:445.7px;top:216px;width:1px;height:14px;background:#dcdcdc"></div>
<div class="tl" style="left:446.9px;top:220.0px">0:12</div>
<div class="a" style="left:471.3px;top:216px;width:1px;height:14px;background:#dcdcdc"></div>
<div class="tl" style="left:472.5px;top:220.0px">0:13</div>
<div class="a" style="left:497.0px;top:216px;width:1px;height:14px;background:#dcdcdc"></div>
<div class="tl" style="left:498.2px;top:220.0px">0:14</div>
<div class="a" style="left:522.6px;top:216px;width:1px;height:14px;background:#dcdcdc"></div>
<div class="tl" style="left:523.8px;top:220.0px">0:15</div>
<div class="tl" style="right:179.3px;top:220.0px">0:16.927</div>
<div class="a" style="left:138.0px;top:340.2px;width:1px;height:14px;background:#dcdcdc"></div>
<div class="tl" style="left:139.2px;top:344.2px">0:00</div>
<div class="a" style="left:163.6px;top:340.2px;width:1px;height:14px;background:#dcdcdc"></div>
<div class="tl" style="left:164.8px;top:344.2px">0:01</div>
<div class="a" style="left:189.3px;top:340.2px;width:1px;height:14px;background:#dcdcdc"></div>
<div class="tl" style="left:190.5px;top:344.2px">0:02</div>
<div class="a" style="left:214.9px;top:340.2px;width:1px;height:14px;background:#dcdcdc"></div>
<div class="tl" style="left:216.1px;top:344.2px">0:03</div>
<div class="a" style="left:240.6px;top:340.2px;width:1px;height:14px;background:#dcdcdc"></div>
<div class="tl" style="left:241.8px;top:344.2px">0:04</div>
<div class="a" style="left:266.2px;top:340.2px;width:1px;height:14px;background:#dcdcdc"></div>
<div class="tl" style="left:267.4px;top:344.2px">0:05</div>
<div class="a" style="left:291.8px;top:340.2px;width:1px;height:14px;background:#dcdcdc"></div>
<div class="tl" style="left:293.0px;top:344.2px">0:06</div>
<div class="a" style="left:317.5px;top:340.2px;width:1px;height:14px;background:#dcdcdc"></div>
<div class="tl" style="left:318.7px;top:344.2px">0:07</div>
<div class="a" style="left:343.1px;top:340.2px;width:1px;height:14px;background:#dcdcdc"></div>
<div class="tl" style="left:344.3px;top:344.2px">0:08</div>
<div class="a" style="left:368.8px;top:340.2px;width:1px;height:14px;background:#dcdcdc"></div>
<div class="tl" style="left:370.0px;top:344.2px">0:09</div>
<div class="a" style="left:394.4px;top:340.2px;width:1px;height:14px;background:#dcdcdc"></div>
<div class="tl" style="left:395.6px;top:344.2px">0:10</div>
<div class="a" style="left:420.0px;top:340.2px;width:1px;height:14px;background:#dcdcdc"></div>
<div class="tl" style="left:421.2px;top:344.2px">0:11</div>
<div class="a" style="left:445.7px;top:340.2px;width:1px;height:14px;background:#dcdcdc"></div>
<div class="tl" style="left:446.9px;top:344.2px">0:12</div>
<div class="a" style="left:471.3px;top:340.2px;width:1px;height:14px;background:#dcdcdc"></div>
<div class="tl" style="left:472.5px;top:344.2px">0:13</div>
<div class="a" style="left:497.0px;top:340.2px;width:1px;height:14px;background:#dcdcdc"></div>
<div class="tl" style="left:498.2px;top:344.2px">0:14</div>
<div class="a" style="left:522.6px;top:340.2px;width:1px;height:14px;background:#dcdcdc"></div>
<div class="tl" style="left:523.8px;top:344.2px">0:15</div>
<div class="tl" style="right:179.3px;top:344.2px">0:16.927</div><!--/GEN-->
<div class="t" style="left:292.4px;top:152px;font-size:9.4px;color:#e6e6e6;-webkit-text-stroke:0">Данные о высоких частотах</div>
<div class="t" style="left:276.5px;top:163.6px;font-size:9.5px;color:#e6e6e6;-webkit-text-stroke:0">доступны только в Premium версии</div>
<div class="t" style="left:292.4px;top:276px;font-size:9.4px;color:#e6e6e6;-webkit-text-stroke:0">Данные о высоких частотах</div>
<div class="t" style="left:276.5px;top:287.6px;font-size:9.5px;color:#e6e6e6;-webkit-text-stroke:0">доступны только в Premium версии</div>

<!-- dialog scrollbar -->
<div class="a" style="left:108px;top:352.4px;width:467px;height:8.8px;background:#f0f0f0"></div>
<div class="a" style="left:118.3px;top:352.6px;width:29.7px;height:8.4px;background:#cdcdcd"></div>
<svg class="a" style="left:111px;top:354px" width="4" height="6" viewBox="0 0 4 6"><path d="M3.2 0.5L1 3L3.2 5.5" fill="none" stroke="#505050" stroke-width="1.2"/></svg>
<svg class="a" style="left:568px;top:354px" width="4" height="6" viewBox="0 0 4 6"><path d="M0.8 0.5L3 3L0.8 5.5" fill="none" stroke="#505050" stroke-width="1.2"/></svg>
</body></html>
